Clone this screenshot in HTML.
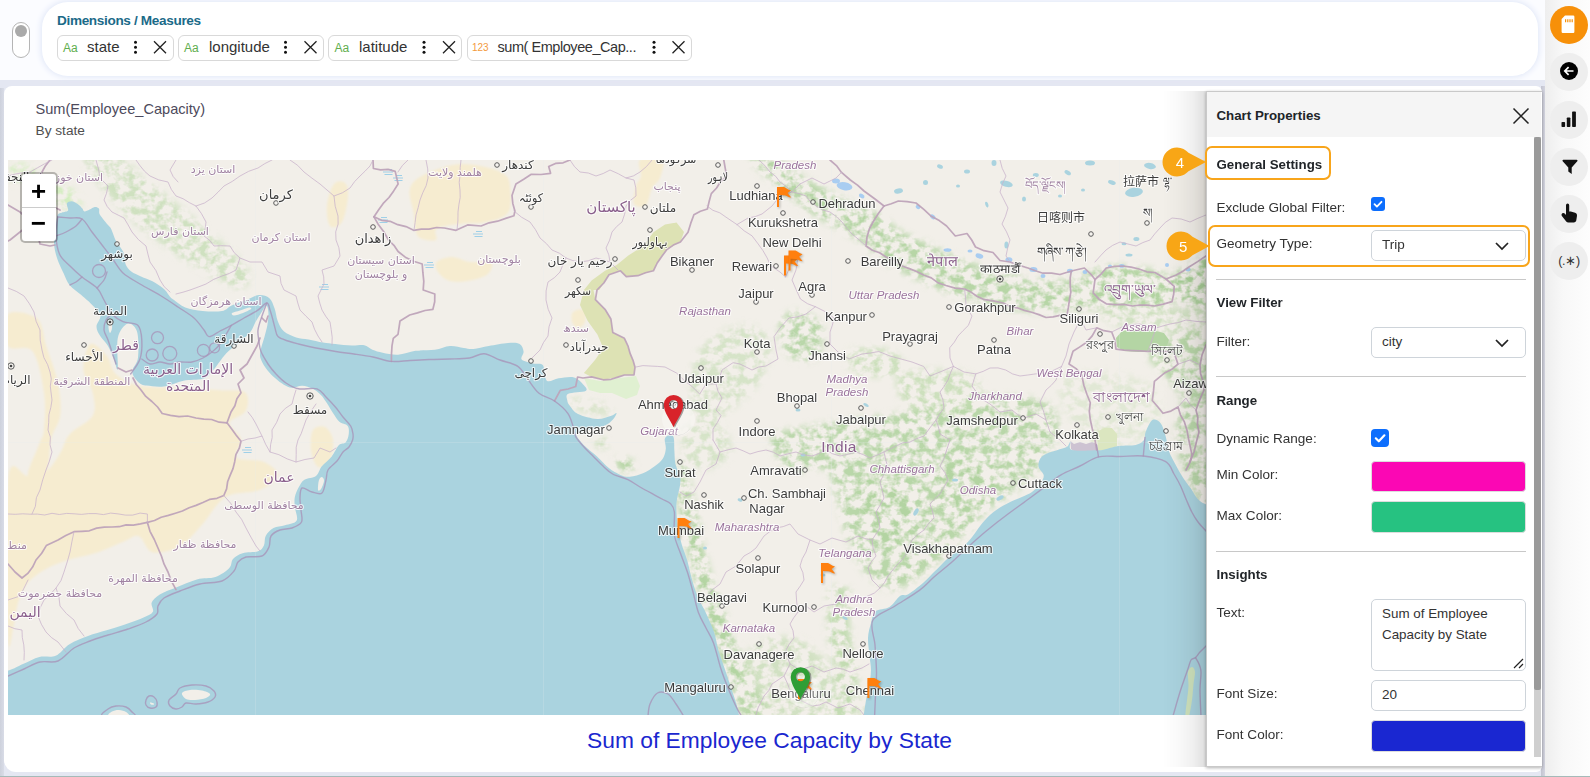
<!DOCTYPE html>
<html lang="en">
<head>
<meta charset="utf-8">
<title>Sum of Employee Capacity by State</title>
<style>
*{box-sizing:border-box;margin:0;padding:0}
html,body{width:1590px;height:777px;overflow:hidden}
body{position:relative;background:#e4e7f2;font-family:"Liberation Sans",sans-serif;color:#212529;font-size:14px}
.abs{position:absolute}
#topbg{left:0;top:0;width:1545px;height:80px;background:#fbfcff}
#topcard{left:42px;top:2px;width:1496px;height:74px;background:#fff;border-radius:26px;box-shadow:0 0 6px 1px #dfe6f7}
#toggle{left:12px;top:22px;width:18px;height:36px;border:1px solid #b5b5b5;border-radius:9px;background:#fff}
#toggle i{position:absolute;left:2px;top:2px;width:12px;height:12px;border-radius:50%;background:#aaa}
#dm{left:57px;top:12.600px;font-size:13.600px;font-weight:bold;color:#1b6a88;letter-spacing:-0.35px;white-space:nowrap}
.chip{top:35px;height:26px;border:1px solid #d9d9d9;border-radius:6px;background:#fff;white-space:nowrap}
.chip .t{position:absolute;top:3px;font-size:11px;color:#5fae4e}
.chip .n{position:absolute;top:2px;font-size:15px;color:#333}
.chip svg{position:absolute;top:0;left:0}
#side{left:1545px;top:0;width:45px;height:777px;background:linear-gradient(to right,#eeeeee,#f8f8f8 40%,#fdfdfd)}
#lstrip{left:0;top:88px;width:4px;height:689px;background:linear-gradient(to right,#cdd1dc,#d9dce7)}
#rstrip{left:1541px;top:86px;width:4px;height:691px;background:linear-gradient(to right,#c3c4d0,#d3d4df)}
#bline{left:0;top:775.500px;width:1590px;height:1.500px;background:#a5bab9}
.cb{left:1550px;width:38px;height:38px;border-radius:50%;background:#eeeeee}
#card{left:4px;top:86px;width:1538px;height:686px;background:#fff;border-radius:8px 6px 6px 12px}
#t1{left:35.500px;top:100.500px;font-size:14.600px;color:#4d4a5c;white-space:nowrap}
#t2{left:35.500px;top:123px;font-size:13.700px;color:#4f4f4f;white-space:nowrap}
#map{left:8px;top:160px;width:1198px;height:555px;overflow:hidden;background:#f2efe9}
#zc{left:11.5px;top:11.5px;width:38px;height:71.500px;border:2px solid rgba(0,0,0,.25);border-radius:5px;background:#fff;background-clip:padding-box}
.zb{width:34px;height:34px;text-align:center;padding-top:4px;font:bold 26px/30px "Liberation Mono","DejaVu Sans Mono",monospace;color:#000}
#cap{left:8px;top:726.800px;width:1523px;text-align:center;font-size:22.800px;color:#1a27cf;white-space:nowrap}
#pshadow{left:1162px;top:91px;width:44px;height:676px;background:linear-gradient(to right,rgba(0,0,0,0),rgba(0,0,0,0.02) 35%,rgba(0,0,0,0.06) 70%,rgba(0,0,0,0.13))}
#panel{left:1206px;top:91px;width:336px;height:676px;background:#fff;border:1px solid #c9c9c9;border-right:none;box-shadow:0 1px 3px rgba(0,0,0,.3)}
#phead{left:1207px;top:92px;width:334px;height:45px;background:#f5f5f5}
#ptitle{left:1216.500px;top:108.100px;font-size:13.300px;font-weight:bold;color:#212529;white-space:nowrap}
.h{left:1216.500px;font-size:13.300px;font-weight:bold;color:#212529;white-space:nowrap}
.l{left:1216.500px;font-size:13.550px;color:#333;white-space:nowrap}
.hr{left:1216px;width:310px;height:1px;background:#c8c8c8}
.inp{left:1371px;width:155px;border:1px solid #ced4da;border-radius:5px;background:#fff;font-size:13.500px;color:#333;padding:6px 0 0 10px}
.sw{left:1371px;width:155px;height:31px;border-radius:4px;border:1px solid #ddd}
.ck{width:15px;height:15px;border-radius:3px;background:#0d6efd}
.hl{border:2px solid #f8a51b;border-radius:7px}
#sbt{left:1534px;top:137px;width:7px;height:620px;background:#cfcfcf}
#sbh{left:1534px;top:137px;width:7px;height:553px;background:#9a9a9a;border-radius:2px}
</style>
</head>
<body>
<div class="abs" id="topbg"></div>
<div class="abs" id="topcard"></div>
<div class="abs" id="toggle"><i></i></div>
<div class="abs" id="dm">Dimensions / Measures</div>
<div class="abs chip" style="left:57px;width:117px"><span class="t" style="left:5px;color:#5fae4e;font-size:12px;top:5px">Aa</span><span class="n" style="left:29px">state</span><svg width="117" height="25" viewBox="0 0 117 25"><circle cx="77.5" cy="6.3" r="1.5" fill="#111"/><circle cx="77.5" cy="11.3" r="1.5" fill="#111"/><circle cx="77.5" cy="16.3" r="1.5" fill="#111"/><path d="M96 5.3l12 12M108 5.3l-12 12" stroke="#222" stroke-width="1.3" fill="none"/></svg></div>
<div class="abs chip" style="left:178px;width:146px"><span class="t" style="left:5px;color:#5fae4e;font-size:12px;top:5px">Aa</span><span class="n" style="left:30px">longitude</span><svg width="146" height="25" viewBox="0 0 146 25"><circle cx="106.5" cy="6.3" r="1.5" fill="#111"/><circle cx="106.5" cy="11.3" r="1.5" fill="#111"/><circle cx="106.5" cy="16.3" r="1.5" fill="#111"/><path d="M125.5 5.3l12 12M137.5 5.3l-12 12" stroke="#222" stroke-width="1.3" fill="none"/></svg></div>
<div class="abs chip" style="left:328px;width:134px"><span class="t" style="left:5.5px;color:#5fae4e;font-size:12px;top:5px">Aa</span><span class="n" style="left:30px">latitude</span><svg width="134" height="25" viewBox="0 0 134 25"><circle cx="95" cy="6.3" r="1.5" fill="#111"/><circle cx="95" cy="11.3" r="1.5" fill="#111"/><circle cx="95" cy="16.3" r="1.5" fill="#111"/><path d="M114 5.3l12 12M126 5.3l-12 12" stroke="#222" stroke-width="1.3" fill="none"/></svg></div>
<div class="abs chip" style="left:467px;width:225px"><span class="t" style="left:4px;color:#f39a3d;font-size:10px;top:6px">123</span><span class="n" style="left:29.5px;font-size:14.500px;letter-spacing:-0.450px;top:2.500px">sum( Employee_Cap...</span><svg width="225" height="25" viewBox="0 0 225 25"><circle cx="186" cy="6.3" r="1.5" fill="#111"/><circle cx="186" cy="11.3" r="1.5" fill="#111"/><circle cx="186" cy="16.3" r="1.5" fill="#111"/><path d="M204.5 5.3l12 12M216.5 5.3l-12 12" stroke="#222" stroke-width="1.3" fill="none"/></svg></div>
<div class="abs" id="side"></div>
<div class="abs" id="lstrip"></div><div class="abs" id="rstrip"></div><div class="abs" id="bline"></div>
<div class="abs cb" style="top:6px;background:#f79009"></div>
<svg class="abs" style="left:1550px;top:6px" width="38" height="38" viewBox="0 0 38 38"><path d="M15 9.5h8.2a1.2 1.2 0 0 1 1.2 1.2v15.1a1.2 1.2 0 0 1-1.2 1.2h-10.4a1.2 1.2 0 0 1-1.2-1.2v-12.8z" fill="#fff"/><path d="M15.6 13.2v3M17.8 13.2v3M20 13.2v3M22.2 13.2v3" stroke="#f79009" stroke-width="1.2"/></svg>
<div class="abs cb" style="top:53px"></div>
<div class="abs cb" style="top:100.5px"></div>
<div class="abs cb" style="top:147.5px"></div>
<div class="abs cb" style="top:194.5px"></div>
<div class="abs cb" style="top:241.5px"></div>
<svg class="abs" style="left:1550px;top:53px" width="38" height="38" viewBox="0 0 38 38"><circle cx="19" cy="18" r="9" fill="#000"/><path d="M23.5 18h-8.5M18.6 14.2l-3.8 3.8 3.8 3.8" stroke="#fff" stroke-width="1.7" fill="none"/></svg>
<svg class="abs" style="left:1550px;top:100.5px" width="38" height="38" viewBox="0 0 38 38"><rect x="11.5" y="21" width="3.6" height="5" rx="0.8" fill="#111"/><rect x="16.8" y="16.5" width="3.6" height="9.5" rx="0.8" fill="#111"/><rect x="22.1" y="10.5" width="3.8" height="15.5" rx="0.8" fill="#111"/></svg>
<svg class="abs" style="left:1550px;top:147.5px" width="38" height="38" viewBox="0 0 38 38"><path d="M11.400 11.800h15.200a.9.9 0 0 1 .7 1.500l-5.600 6.300v6.300l-3.400-2.300v-4l-5.600-6.300a.9.9 0 0 1 .7-1.500z" fill="#111"/></svg>
<svg class="abs" style="left:1550px;top:194.5px" width="38" height="38" viewBox="0 0 38 38"><path d="M16 10.2a1.6 1.6 0 0 1 3.2 0v6.2l1.6.2 4.3 1.2c1.3.4 2.1 1.5 1.9 2.9l-.7 4.6c-.2 1.3-1.2 2.2-2.5 2.2h-5.400c-.9 0-1.700-.4-2.200-1.100l-4.300-5.500c-.6-.8-.5-1.900.3-2.500.7-.6 1.800-.5 2.500.2l1.300 1.300z" fill="#111"/></svg>
<div class="abs" style="left:1550px;top:252.5px;width:38px;text-align:center;font-size:12.500px;letter-spacing:-0.3px;color:#333;font-family:'Liberation Sans',sans-serif;white-space:nowrap">(.&#8727;)</div>
<div class="abs" id="card"></div>
<div class="abs" id="t1">Sum(Employee_Capacity)</div>
<div class="abs" id="t2">By state</div>
<div class="abs" id="map">
<svg width="1198" height="555" viewBox="8 160 1198 555" style="position:absolute;left:0;top:0;display:block" font-family="Liberation Sans, DejaVu Sans, Noto Sans CJK SC, sans-serif">
<defs><filter id="b3" x="-20%" y="-20%" width="140%" height="140%"><feGaussianBlur stdDeviation="3"/></filter><filter id="b6" x="-30%" y="-30%" width="160%" height="160%"><feGaussianBlur stdDeviation="6"/></filter><filter id="forest" filterUnits="userSpaceOnUse" x="8" y="160" width="1198" height="555"><feGaussianBlur in="SourceGraphic" stdDeviation="3.5" result="bl"/><feTurbulence type="fractalNoise" baseFrequency="0.11 0.13" numOctaves="3" seed="7" result="nz"/><feColorMatrix in="nz" type="matrix" values="0 0 0 0 0 0 0 0 0 0 0 0 0 0 0 0 3.6 0 0 -1.42" result="mk"/><feComposite in="bl" in2="mk" operator="in"/></filter><filter id="b1" x="-10%" y="-10%" width="120%" height="120%"><feGaussianBlur stdDeviation="1.2"/></filter></defs>
<rect x="8" y="160" width="1198" height="555" fill="#f2efe9"/>
<g fill="#f6ecd0" filter="url(#b1)">
<path d="M409.7 189.7C411.0 183.6 413.9 180.4 421.3 176.2C428.7 172.0 443.7 166.3 454.0 164.7C464.3 163.1 474.6 165.0 483.0 166.6C491.4 168.2 499.8 171.1 504.3 174.3C508.8 177.5 509.4 179.5 510.0 185.9C510.6 192.3 512.5 206.9 508.0 213.0C503.5 219.1 490.4 220.8 483.0 222.6C475.6 224.3 471.4 222.5 463.7 223.5C456.0 224.5 441.6 225.7 437.0 228.4C432.4 231.2 438.8 238.4 436.0 240.0C433.2 241.6 423.4 239.8 420.0 238.0C416.6 236.2 416.6 233.5 415.5 229.3C414.4 225.1 414.6 219.6 413.6 213.0C412.6 206.4 408.4 195.8 409.7 189.7Z"/>
<path d="M436.7 262.0C439.0 259.5 446.4 257.0 452.0 257.0C457.6 257.0 463.5 261.2 470.0 262.0C476.5 262.8 487.8 260.0 490.8 262.0C493.8 264.0 491.5 270.9 488.0 274.0C484.5 277.1 476.3 279.3 470.0 280.5C463.7 281.7 455.3 282.4 450.0 281.0C444.7 279.6 440.2 275.2 438.0 272.0C435.8 268.8 434.4 264.5 436.7 262.0Z"/>
<path d="M334.0 184.0C337.0 180.3 342.7 181.0 345.0 183.0C347.3 185.0 348.5 189.5 348.0 196.0C347.5 202.5 345.0 217.0 342.0 222.0C339.0 227.0 332.5 228.8 330.0 226.0C327.5 223.2 326.3 212.0 327.0 205.0C327.7 198.0 331.0 187.7 334.0 184.0Z"/>
<path d="M640.0 160.0C643.5 157.3 658.7 157.0 662.0 160.0C665.3 163.0 661.7 173.3 660.0 178.0C658.3 182.7 654.3 183.5 652.0 188.0C649.7 192.5 649.0 202.3 646.0 205.0C643.0 207.7 635.7 207.2 634.0 204.0C632.3 200.8 634.8 190.7 636.0 186.0C637.2 181.3 640.3 180.3 641.0 176.0C641.7 171.7 636.5 162.7 640.0 160.0Z"/>
<path d="M8.0 314.0C12.8 309.4 30.6 313.1 37.0 318.5C43.4 323.9 42.8 335.5 46.3 346.3C49.8 357.1 55.7 371.8 58.0 383.4C60.3 395.0 61.4 406.5 60.2 415.8C59.0 425.1 53.3 429.7 51.0 439.0C48.7 448.3 50.2 465.3 46.3 471.5C42.4 477.7 28.9 480.6 27.8 476.0C26.7 471.4 36.7 451.3 39.4 443.6C42.1 435.9 43.2 438.2 44.0 429.7C44.8 421.2 45.9 405.8 44.0 392.7C42.1 379.6 38.4 358.7 32.4 351.0C26.4 343.3 12.1 352.5 8.0 346.3C3.9 340.1 3.2 318.6 8.0 314.0Z"/>
<path d="M90.4 344.0C94.3 341.7 102.4 350.6 106.6 355.6C110.8 360.6 110.4 369.0 115.8 374.0C121.2 379.0 127.4 383.4 139.0 385.7C150.6 388.0 171.5 387.2 185.4 388.0C199.3 388.8 212.4 389.6 222.4 390.4C232.4 391.2 241.7 389.2 245.6 392.7C249.5 396.2 248.3 406.2 245.6 411.2C242.9 416.2 230.2 418.2 229.4 422.8C228.6 427.4 239.8 433.2 241.0 439.0C242.2 444.8 232.5 453.8 236.3 457.6C240.1 461.4 257.1 458.9 264.0 462.0C270.9 465.1 278.8 471.3 278.0 476.0C277.2 480.7 267.2 486.9 259.5 490.0C251.8 493.1 238.6 492.3 231.7 494.6C224.8 496.9 222.4 499.3 217.8 503.9C213.2 508.5 210.1 515.4 203.9 522.4C197.7 529.4 189.2 540.6 180.7 545.6C172.2 550.6 159.8 554.0 152.9 552.5C146.0 551.0 143.7 538.2 139.0 536.3C134.3 534.4 131.9 538.3 125.0 541.0C118.0 543.7 106.5 549.4 97.3 552.5C88.0 555.6 78.0 556.8 69.5 559.5C61.0 562.2 53.2 564.9 46.3 568.8C39.3 572.7 32.4 577.3 27.8 582.7C23.2 588.1 20.8 594.2 18.5 601.2C16.2 608.2 15.7 618.2 13.9 624.4C12.2 630.6 9.0 662.6 8.0 638.3C7.0 614.0 4.7 505.4 8.0 478.4C11.3 451.3 21.4 477.1 27.8 476.0C34.2 474.9 40.9 475.3 46.3 471.5C51.7 467.7 56.3 459.2 60.2 453.0C64.1 446.8 64.1 440.6 69.5 434.4C74.9 428.2 88.8 422.8 92.7 415.8C96.6 408.9 94.2 400.4 92.7 392.7C91.2 385.0 83.8 377.6 83.4 369.5C83.0 361.4 86.5 346.3 90.4 344.0Z"/>
<path d="M313.0 430.0C315.3 426.2 321.7 425.3 325.0 427.0C328.3 428.7 332.2 434.5 333.0 440.0C333.8 445.5 332.5 455.5 330.0 460.0C327.5 464.5 321.2 468.7 318.0 467.0C314.8 465.3 311.8 456.2 311.0 450.0C310.2 443.8 310.7 433.8 313.0 430.0Z"/>
<path d="M573.0 312.0C575.0 310.0 582.0 308.3 584.0 310.0C586.0 311.7 586.0 319.0 585.0 322.0C584.0 325.0 580.2 328.0 578.0 328.0C575.8 328.0 572.8 324.7 572.0 322.0C571.2 319.3 571.0 314.0 573.0 312.0Z"/>
</g>
<g filter="url(#forest)">
<path d="M749.3 154.1C748.7 157.8 750.3 160.6 757.0 167.7C763.8 174.8 779.3 188.4 789.8 196.8C800.2 205.2 808.8 211.3 819.8 218.2C830.8 225.1 844.8 231.1 855.7 238.3C866.5 245.4 874.6 254.7 884.7 261.4C894.7 268.1 904.9 272.8 915.9 278.3C926.9 283.7 938.4 289.5 950.8 293.9C963.2 298.3 977.2 301.6 990.4 304.5C1003.7 307.4 1016.9 310.4 1030.2 311.4C1043.5 312.4 1059.0 311.6 1070.3 310.4C1081.6 309.3 1094.5 310.5 1098.1 304.7C1101.7 298.8 1097.0 279.3 1091.9 275.3C1086.8 271.3 1077.4 279.8 1067.7 280.6C1058.0 281.3 1044.9 281.1 1033.4 279.6C1021.9 278.1 1010.3 274.7 998.6 271.5C986.9 268.3 974.4 264.4 963.2 260.1C952.0 255.8 941.4 250.3 931.3 245.7C921.2 241.2 912.6 238.4 902.7 232.6C892.9 226.8 883.9 217.4 872.3 210.9C860.8 204.5 844.9 199.4 833.4 193.8C822.0 188.2 814.4 183.8 803.6 177.2C792.9 170.6 776.1 159.5 769.0 154.3C761.8 149.0 763.9 145.9 760.7 145.9C757.4 145.9 749.9 150.5 749.3 154.1Z" fill="#b3d4a2" opacity="0.95"/>
<path d="M1091.0 272.0C1094.3 265.8 1108.5 266.0 1120.0 266.0C1131.5 266.0 1151.3 268.8 1160.0 272.0C1168.7 275.2 1170.3 279.5 1172.0 285.0C1173.7 290.5 1177.0 301.2 1170.0 305.0C1163.0 308.8 1141.7 308.3 1130.0 308.0C1118.3 307.7 1106.5 309.0 1100.0 303.0C1093.5 297.0 1087.7 278.2 1091.0 272.0Z" fill="#b3d4a2" opacity="1"/>
<path d="M1172.0 276.0C1174.7 270.7 1183.7 269.5 1190.0 266.0C1196.3 262.5 1206.7 248.5 1210.0 255.0C1213.3 261.5 1214.2 297.0 1210.0 305.0C1205.8 313.0 1191.0 304.2 1185.0 303.0C1179.0 301.8 1176.2 302.5 1174.0 298.0C1171.8 293.5 1169.3 281.3 1172.0 276.0Z" fill="#a9cf98" opacity="1"/>
<path d="M1150.0 352.0C1157.5 346.2 1200.0 314.5 1210.0 340.0C1220.0 365.5 1213.0 480.0 1210.0 505.0C1207.0 530.0 1197.0 497.5 1192.0 490.0C1187.0 482.5 1182.7 470.0 1180.0 460.0C1177.3 450.0 1175.7 440.0 1176.0 430.0C1176.3 420.0 1183.8 409.2 1182.0 400.0C1180.2 390.8 1170.3 383.0 1165.0 375.0C1159.7 367.0 1142.5 357.8 1150.0 352.0Z" fill="#b3d4a2" opacity="0.9"/>
<path d="M1100.0 305.0C1110.0 302.7 1151.7 307.2 1170.0 308.0C1188.3 308.8 1203.3 305.5 1210.0 310.0C1216.7 314.5 1220.0 331.7 1210.0 335.0C1200.0 338.3 1166.7 332.2 1150.0 330.0C1133.3 327.8 1118.3 326.2 1110.0 322.0C1101.7 317.8 1090.0 307.3 1100.0 305.0Z" fill="#c3dcb2" opacity="0.7"/>
<path d="M84.7 157.9C83.7 164.8 92.4 173.9 99.4 183.4C106.3 192.8 116.8 205.2 126.5 214.8C136.2 224.3 147.0 232.7 157.5 240.6C168.0 248.6 178.9 256.0 189.3 262.5C199.6 268.9 211.1 274.9 219.6 279.2C228.0 283.5 234.8 288.7 239.9 288.2C245.0 287.6 250.7 281.0 250.1 275.8C249.5 270.6 243.0 263.9 236.4 256.8C229.9 249.8 219.7 241.4 210.7 233.5C201.7 225.6 192.0 217.4 182.5 209.4C173.0 201.3 163.1 193.4 153.5 185.2C143.8 177.1 132.7 167.8 124.6 160.6C116.6 153.4 111.9 142.5 105.3 142.1C98.6 141.6 85.7 151.1 84.7 157.9Z" fill="#c3dcb2" opacity="0.75"/>
<path d="M38.0 186.0C43.0 183.8 54.3 182.3 60.0 183.0C65.7 183.7 68.3 186.5 72.0 190.0C75.7 193.5 82.3 200.7 82.0 204.0C81.7 207.3 74.0 209.7 70.0 210.0C66.0 210.3 62.2 207.7 58.0 206.0C53.8 204.3 49.7 201.7 45.0 200.0C40.3 198.3 31.2 198.3 30.0 196.0C28.8 193.7 33.0 188.2 38.0 186.0Z" fill="#d3edbf" opacity="1"/>
<path d="M8.0 166.0C11.7 163.3 24.7 162.5 30.0 164.0C35.3 165.5 40.8 172.0 40.0 175.0C39.2 178.0 30.3 181.2 25.0 182.0C19.7 182.8 10.8 182.7 8.0 180.0C5.2 177.3 4.3 168.7 8.0 166.0Z" fill="#d3edbf" opacity="0.8"/>
<path d="M782.0 318.0C785.3 313.3 793.7 311.3 800.0 312.0C806.3 312.7 816.3 316.5 820.0 322.0C823.7 327.5 823.3 338.7 822.0 345.0C820.7 351.3 817.0 357.8 812.0 360.0C807.0 362.2 797.3 361.3 792.0 358.0C786.7 354.7 781.7 346.7 780.0 340.0C778.3 333.3 778.7 322.7 782.0 318.0Z" fill="#b3d4a2" opacity="0.9"/>
<path d="M849.0 351.0C854.0 347.7 871.3 346.8 880.0 348.0C888.7 349.2 898.0 353.7 901.0 358.0C904.0 362.3 903.2 371.0 898.0 374.0C892.8 377.0 878.0 377.0 870.0 376.0C862.0 375.0 853.5 372.2 850.0 368.0C846.5 363.8 844.0 354.3 849.0 351.0Z" fill="#c3dcb2" opacity="0.8"/>
<path d="M770.0 438.0C771.7 431.0 786.7 431.0 800.0 428.0C813.3 425.0 832.5 422.7 850.0 420.0C867.5 417.3 886.7 415.7 905.0 412.0C923.3 408.3 942.5 400.7 960.0 398.0C977.5 395.3 995.0 394.8 1010.0 396.0C1025.0 397.2 1042.0 399.3 1050.0 405.0C1058.0 410.7 1058.8 420.5 1058.0 430.0C1057.2 439.5 1051.3 452.3 1045.0 462.0C1038.7 471.7 1029.2 480.3 1020.0 488.0C1010.8 495.7 999.2 500.2 990.0 508.0C980.8 515.8 973.3 526.3 965.0 535.0C956.7 543.7 948.3 552.5 940.0 560.0C931.7 567.5 923.3 575.0 915.0 580.0C906.7 585.0 897.8 590.8 890.0 590.0C882.2 589.2 874.7 582.5 868.0 575.0C861.3 567.5 855.0 556.7 850.0 545.0C845.0 533.3 842.0 517.5 838.0 505.0C834.0 492.5 834.0 475.8 826.0 470.0C818.0 464.2 799.3 475.3 790.0 470.0C780.7 464.7 768.3 445.0 770.0 438.0Z" fill="#b3d4a2" opacity="0.9"/>
<path d="M862.0 480.0C866.8 470.7 886.2 469.5 895.0 472.0C903.8 474.5 912.2 485.3 915.0 495.0C917.8 504.7 916.2 521.2 912.0 530.0C907.8 538.8 897.7 548.3 890.0 548.0C882.3 547.7 870.7 539.3 866.0 528.0C861.3 516.7 857.2 489.3 862.0 480.0Z" fill="#b3d4a2" opacity="1"/>
<path d="M935.0 470.0C939.2 461.7 964.2 460.3 975.0 462.0C985.8 463.7 998.3 472.8 1000.0 480.0C1001.7 487.2 993.3 499.7 985.0 505.0C976.7 510.3 958.3 517.8 950.0 512.0C941.7 506.2 930.8 478.3 935.0 470.0Z" fill="#b3d4a2" opacity="1"/>
<path d="M900.0 375.0C908.3 369.0 945.8 369.2 960.0 372.0C974.2 374.8 985.0 385.3 985.0 392.0C985.0 398.7 972.5 409.3 960.0 412.0C947.5 414.7 920.0 414.2 910.0 408.0C900.0 401.8 891.7 381.0 900.0 375.0Z" fill="#c3dcb2" opacity="0.8"/>
<path d="M675.1 465.7C673.6 469.5 674.9 477.9 676.1 487.3C677.3 496.6 679.8 509.1 682.2 521.6C684.5 534.0 687.0 548.4 690.2 561.9C693.5 575.5 697.4 589.2 701.4 602.8C705.5 616.4 709.9 629.9 714.6 643.5C719.4 657.1 724.8 671.4 729.9 684.3C734.9 697.2 738.9 716.4 745.0 720.9C751.2 725.3 766.1 718.7 767.0 711.1C767.8 703.6 755.7 688.2 750.1 675.7C744.5 663.3 738.6 649.6 733.4 636.5C728.1 623.4 723.2 610.3 718.6 597.2C714.0 584.1 709.2 571.2 705.8 558.1C702.3 544.9 700.5 530.6 697.8 518.4C695.2 506.2 692.0 493.8 689.9 484.7C687.7 475.7 687.4 467.5 684.9 464.3C682.5 461.1 676.5 461.9 675.1 465.7Z" fill="#b3d4a2" opacity="1"/>
<path d="M830.0 589.3C826.2 594.3 826.8 610.0 827.0 620.4C827.2 630.8 829.3 641.9 831.1 651.8C833.0 661.7 838.0 669.3 838.0 679.7C838.0 690.1 829.4 707.7 831.2 714.0C833.0 720.4 844.3 723.6 848.8 718.0C853.2 712.3 857.3 691.9 858.0 680.3C858.7 668.7 854.4 658.3 852.9 648.2C851.4 638.1 849.5 629.2 849.0 619.6C848.5 610.0 853.1 595.7 850.0 590.7C846.8 585.6 833.9 584.4 830.0 589.3Z" fill="#c3dcb2" opacity="1"/>
<path d="M700.0 350.0C708.3 337.5 728.3 326.7 740.0 325.0C751.7 323.3 766.7 330.8 770.0 340.0C773.3 349.2 766.7 368.3 760.0 380.0C753.3 391.7 739.2 401.7 730.0 410.0C720.8 418.3 711.7 431.7 705.0 430.0C698.3 428.3 690.8 413.3 690.0 400.0C689.2 386.7 691.7 362.5 700.0 350.0Z" fill="#c3dcb2" opacity="0.6"/>
<path d="M686.0 430.0C692.0 425.0 712.7 420.8 720.0 425.0C727.3 429.2 733.3 447.5 730.0 455.0C726.7 462.5 707.7 470.0 700.0 470.0C692.3 470.0 686.3 461.7 684.0 455.0C681.7 448.3 680.0 435.0 686.0 430.0Z" fill="#c3dcb2" opacity="0.6"/>
<path d="M750.0 650.0C758.3 637.3 783.3 633.3 800.0 640.0C816.7 646.7 840.0 677.3 850.0 690.0C860.0 702.7 876.7 711.7 860.0 716.0C843.3 720.3 768.3 727.0 750.0 716.0C731.7 705.0 741.7 662.7 750.0 650.0Z" fill="#c3dcb2" opacity="0.7"/>
<path d="M616.0 459.0C618.3 457.7 630.5 459.0 633.0 461.0C635.5 463.0 633.3 469.7 631.0 471.0C628.7 472.3 621.5 471.0 619.0 469.0C616.5 467.0 613.7 460.3 616.0 459.0Z" fill="#b3d4a2" opacity="1"/>
<path d="M597.0 439.0C598.7 437.8 605.7 438.5 607.0 440.0C608.3 441.5 606.7 446.8 605.0 448.0C603.3 449.2 598.3 448.5 597.0 447.0C595.7 445.5 595.3 440.2 597.0 439.0Z" fill="#c3dcb2" opacity="1"/>
<path d="M570.0 398.0C573.7 396.7 593.0 399.7 600.0 402.0C607.0 404.3 612.0 409.7 612.0 412.0C612.0 414.3 605.7 416.3 600.0 416.0C594.3 415.7 583.0 413.0 578.0 410.0C573.0 407.0 566.3 399.3 570.0 398.0Z" fill="#c3dcb2" opacity="0.5"/>
<path d="M1060.0 380.0C1065.0 372.0 1085.0 371.2 1100.0 372.0C1115.0 372.8 1140.0 377.0 1150.0 385.0C1160.0 393.0 1161.7 410.8 1160.0 420.0C1158.3 429.2 1150.0 435.8 1140.0 440.0C1130.0 444.2 1111.7 448.3 1100.0 445.0C1088.3 441.7 1076.7 430.8 1070.0 420.0C1063.3 409.2 1055.0 388.0 1060.0 380.0Z" fill="#c3dcb2" opacity="0.35"/>
<path d="M1097.0 432.0C1099.7 429.3 1107.2 425.8 1110.0 428.0C1112.8 430.2 1115.7 441.3 1114.0 445.0C1112.3 448.7 1103.3 450.2 1100.0 450.0C1096.7 449.8 1094.5 447.0 1094.0 444.0C1093.5 441.0 1094.3 434.7 1097.0 432.0Z" fill="#cfe0b0" opacity="1"/>
</g>
<path d="M676.5 222.6 L665.0 224.5 L653.4 232.2 L643.7 245.7 L628.3 255.4 L616.7 265.0 L605.0 270.8 L591.6 280.5 L583.9 290.0 L580.0 305.0 L587.7 320.9 L597.4 334.4 L603.2 347.9 L595.4 359.5 L583.9 373.0 L591.6 376.9 L603.2 379.8 L618.6 376.9 L624.4 375.0 L634.0 375.0 L635.0 367.2 L630.2 353.7 L624.4 338.3 L612.8 332.5 L610.9 319.0 L605.0 309.3 L595.4 299.7 L593.5 290.0 L599.3 290.0 L609.0 274.7 L620.5 270.8 L626.3 276.6 L637.9 275.7 L653.4 270.8 L657.2 263.0 L666.9 249.6 L680.4 241.9 L684.0 232.0Z" fill="#dde2b4"/>
<path d="M584.0 378.0 L600.0 381.0 L620.0 378.0 L636.0 376.0 L640.0 386.0 L637.0 395.0 L626.0 399.0 L612.0 393.0 L600.0 393.0 L589.0 390.0Z" fill="#e0f0d1"/>
<path d="M1116.0 338.0 L1122.0 331.0 L1136.0 329.0 L1152.0 330.0 L1164.0 333.0 L1169.0 340.0 L1166.0 348.0 L1154.0 352.0 L1138.0 352.0 L1124.0 351.0 L1117.0 347.0Z" fill="#b4d5a4"/>
<path d="M1070.5 441.0 L1074.0 444.0 L1080.0 442.0 L1086.0 444.0 L1092.0 442.0 L1097.0 444.0 L1097.5 451.0 L1090.0 452.0 L1082.0 451.0 L1075.0 452.0 L1071.0 449.0Z" fill="#cdc3d2"/>
<path d="M1097.0 432.0 L1104.0 428.0 L1112.0 428.0 L1117.0 434.0 L1117.0 446.0 L1110.0 450.0 L1098.0 451.0Z" fill="#dbe6c0"/>
<path d="M57.7 214.7C58.7 212.6 60.1 213.4 61.8 212.7C63.5 212.0 67.2 212.1 68.0 210.6C68.8 209.1 66.2 204.9 66.9 203.4C67.6 201.9 70.1 201.1 72.0 201.3C73.9 201.5 76.6 203.2 78.3 204.4C80.0 205.6 81.4 207.4 82.4 208.6C83.4 209.8 83.2 211.4 84.4 211.6C85.6 211.8 87.9 210.4 89.6 209.6C91.3 208.8 93.2 207.2 94.7 207.0C96.2 206.8 98.1 207.5 98.9 208.6C99.7 209.7 98.7 212.0 99.4 213.7C100.1 215.4 101.6 217.0 103.0 218.9C104.4 220.8 106.6 223.3 108.0 225.0C109.4 226.7 109.9 226.4 111.2 229.0C112.5 231.6 113.8 236.8 115.8 240.7C117.8 244.6 121.9 248.4 123.5 252.3C125.1 256.2 124.2 260.7 125.5 263.9C126.8 267.1 128.7 269.5 131.3 271.6C133.9 273.7 137.5 274.8 141.0 276.4C144.5 278.0 148.7 279.2 152.5 281.3C156.3 283.4 161.1 286.4 164.0 289.0C166.9 291.6 168.4 294.9 170.0 296.7C171.6 298.5 171.1 297.9 173.7 299.7C176.2 301.5 180.5 305.5 185.3 307.4C190.1 309.3 196.6 310.4 202.7 311.0C208.8 311.6 217.2 311.9 222.0 311.0C226.8 310.1 227.5 307.3 231.7 305.4C235.9 303.5 242.4 301.4 247.0 299.7C251.6 298.0 255.3 295.2 259.0 295.0C262.7 294.8 266.8 295.9 269.4 298.2C272.0 300.4 273.2 304.7 274.6 308.5C276.0 312.3 276.2 317.1 277.7 320.9C279.2 324.7 280.7 328.4 283.8 331.2C286.9 333.9 292.1 336.0 296.2 337.4C300.3 338.8 304.0 338.5 308.5 339.4C313.0 340.2 318.5 341.7 323.0 342.5C327.5 343.3 330.5 343.5 335.3 344.0C340.1 344.5 347.0 345.4 351.8 345.6C356.6 345.8 360.8 344.5 364.2 345.2C367.6 345.9 369.3 348.4 372.4 349.7C375.5 350.9 378.4 351.9 382.7 352.7C387.0 353.5 392.5 355.0 398.0 354.7C403.5 354.4 409.4 351.6 415.5 350.8C421.6 350.0 429.1 350.6 434.8 349.8C440.6 349.0 445.2 346.3 450.0 346.0C454.8 345.7 459.8 347.5 463.7 348.0C467.6 348.5 469.2 349.2 473.4 348.9C477.6 348.6 483.0 347.0 488.8 346.0C494.6 345.0 502.9 343.3 508.0 343.0C513.1 342.7 517.1 342.5 519.7 344.0C522.3 345.5 523.3 349.2 523.6 351.8C523.9 354.4 520.1 357.6 521.7 359.5C523.3 361.4 529.5 362.4 533.0 363.4C536.5 364.4 540.7 362.4 543.0 365.3C545.3 368.2 544.2 378.5 546.8 380.7C549.4 382.9 554.1 378.9 558.6 378.3C563.1 377.8 569.8 376.3 574.0 377.4C578.2 378.5 581.8 382.7 583.7 385.0C585.6 387.3 588.2 389.5 585.6 391.0C583.0 392.5 571.3 392.2 568.3 393.8C565.2 395.4 567.0 398.5 567.3 400.5C567.6 402.5 568.2 403.8 570.0 406.0C571.8 408.2 573.5 411.8 578.0 414.0C582.5 416.2 591.5 418.7 597.0 419.0C602.5 419.3 607.5 417.0 610.7 416.0C614.0 415.0 616.2 412.4 616.5 413.0C616.8 413.6 614.6 417.7 612.7 419.8C610.8 421.9 608.2 424.2 605.0 425.6C601.8 427.1 597.3 427.5 593.4 428.5C589.5 429.5 584.7 430.4 581.8 431.4C578.9 432.4 575.7 432.0 576.0 434.3C576.3 436.6 580.2 441.3 583.7 445.0C587.2 448.7 592.8 452.7 597.0 456.5C601.2 460.3 604.9 464.9 608.8 468.0C612.7 471.1 616.9 473.4 620.4 474.9C623.9 476.4 626.1 477.1 630.0 476.8C633.9 476.5 639.4 474.8 643.6 473.0C647.8 471.2 651.8 468.4 655.0 466.0C658.2 463.6 661.1 461.4 662.9 458.5C664.7 455.6 665.5 452.1 665.8 448.8C666.1 445.6 664.3 441.2 664.8 439.0C665.3 436.8 667.1 435.6 668.6 435.3C670.1 435.0 672.5 434.4 673.5 437.0C674.5 439.6 674.1 446.2 674.4 450.7C674.7 455.2 674.5 459.8 675.4 464.0C676.3 468.2 679.2 472.2 680.0 475.8C680.8 479.4 680.5 481.6 680.0 485.5C679.5 489.4 677.6 494.9 677.0 499.0C676.4 503.1 676.3 505.6 676.4 510.0C676.5 514.4 676.8 520.0 677.6 525.5C678.4 531.0 679.8 537.4 681.4 543.3C683.0 549.2 685.7 555.1 687.4 561.0C689.1 566.9 690.1 572.9 691.8 578.8C693.5 584.7 695.2 590.7 697.7 596.6C700.2 602.5 703.9 608.5 706.6 614.4C709.3 620.3 712.0 626.1 714.0 632.0C716.0 637.9 716.7 644.0 718.4 650.0C720.1 656.0 722.4 661.8 724.4 667.7C726.4 673.6 728.3 679.5 730.3 685.4C732.3 691.3 734.7 698.1 736.2 703.2C737.7 708.3 737.7 709.0 739.2 716.0C740.7 723.0 873.2 740.2 745.0 745.0C616.8 749.8 99.2 755.8 -30.0 745.0C-159.2 734.2 -36.2 692.3 -30.0 680.0C-23.8 667.7 -1.8 673.7 7.0 671.0C15.8 668.3 17.6 666.3 23.0 664.0C28.4 661.7 34.0 658.4 39.4 657.0C44.8 655.6 50.6 657.9 55.6 655.8C60.6 653.7 64.1 647.5 69.5 644.2C74.9 640.9 81.8 638.3 88.0 636.0C94.2 633.7 100.4 632.2 106.6 630.3C112.8 628.4 118.8 626.6 125.0 624.5C131.2 622.4 138.9 619.7 143.6 617.6C148.2 615.5 151.6 614.3 152.9 611.8C154.2 609.3 150.5 605.4 151.7 602.5C152.8 599.6 155.8 596.9 159.8 594.4C163.9 591.9 169.8 590.0 176.0 587.5C182.2 585.0 190.3 581.1 196.9 579.4C203.5 577.6 210.0 578.9 215.4 577.0C220.8 575.1 226.4 571.0 229.3 568.0C232.2 565.0 230.8 561.5 233.0 559.0C235.2 556.5 238.5 554.5 242.7 553.2C246.9 551.9 254.5 552.6 258.0 551.3C261.5 550.0 262.6 548.1 263.9 545.5C265.2 542.9 264.2 538.7 265.8 535.8C267.4 532.9 270.3 529.8 273.5 528.0C276.7 526.2 281.1 526.5 285.0 525.2C288.9 523.9 295.1 523.5 296.7 520.4C298.3 517.3 295.1 510.8 294.8 506.9C294.5 503.0 294.2 500.4 294.8 497.2C295.4 494.0 297.0 490.5 298.6 487.6C300.2 484.7 301.5 481.7 304.4 479.8C307.3 477.9 313.1 478.2 316.0 476.0C318.9 473.8 319.2 469.5 321.8 466.3C324.4 463.1 328.6 460.2 331.5 456.7C334.4 453.1 336.6 447.4 339.0 445.0C341.4 442.6 344.0 444.2 345.6 442.4C347.2 440.6 348.4 436.9 348.7 434.2C349.0 431.4 349.2 428.0 347.7 425.9C346.1 423.8 341.8 423.9 339.4 421.8C337.0 419.8 335.4 416.7 333.3 413.6C331.2 410.5 329.1 406.4 327.0 403.3C324.9 400.2 323.3 397.4 320.9 395.0C318.5 392.6 315.8 390.3 312.7 388.8C309.6 387.3 305.8 386.0 302.4 385.8C298.9 385.6 295.1 388.0 292.0 387.8C288.9 387.6 286.5 386.2 283.8 384.7C281.1 383.2 278.3 381.0 275.6 378.6C272.9 376.2 269.8 373.4 267.4 370.3C265.0 367.2 262.4 363.1 261.2 360.0C260.0 356.9 259.7 355.6 260.2 351.8C260.7 348.0 263.1 341.9 264.3 337.4C265.5 332.9 266.7 329.1 267.4 325.0C268.1 320.9 268.6 316.0 268.4 312.7C268.2 309.4 267.5 305.4 266.3 305.4C265.1 305.4 263.1 309.8 261.2 312.7C259.3 315.6 256.7 319.9 255.0 323.0C253.3 326.1 253.3 328.1 250.9 331.2C248.5 334.3 243.7 338.8 240.6 341.5C237.5 344.2 235.2 345.3 232.4 347.7C229.6 350.1 227.3 352.0 224.0 355.9C220.7 359.8 216.0 367.2 212.4 371.0C208.8 374.8 207.5 377.2 202.7 378.8C197.9 380.4 189.8 379.4 183.4 380.7C177.0 382.0 170.1 385.7 164.0 386.5C157.9 387.3 150.9 386.2 146.7 385.6C142.5 385.0 141.3 384.5 139.0 382.7C136.7 380.9 134.0 377.3 133.0 375.0C132.0 372.7 132.2 371.9 133.0 369.0C133.8 366.1 137.3 363.9 138.0 357.6C138.7 351.4 138.8 337.1 137.0 331.5C135.2 325.9 130.6 322.7 127.4 323.8C124.2 324.9 119.4 330.5 117.8 338.0C116.2 345.5 118.4 365.4 117.8 369.0C117.2 372.6 115.6 363.3 114.0 359.5C112.4 355.7 110.3 349.9 108.0 346.0C105.7 342.1 102.3 339.5 100.4 336.3C98.5 333.1 96.5 330.2 96.5 326.7C96.5 323.1 101.4 318.9 100.4 315.0C99.4 311.1 92.9 306.0 90.7 303.5C88.5 301.0 88.6 301.4 87.0 300.0C85.4 298.6 83.9 297.3 81.0 294.8C78.1 292.3 72.4 288.6 69.5 285.0C66.6 281.4 65.8 278.0 63.7 273.5C61.6 269.0 58.6 263.1 57.0 258.0C55.4 252.9 54.2 248.2 54.0 242.7C53.8 237.2 55.4 229.7 56.0 225.0C56.6 220.3 56.7 216.8 57.7 214.7Z" fill="#aad3df"/>
<path d="M858.0 745.0C795.2 740.2 862.1 724.0 863.5 716.0C864.9 708.0 865.6 702.0 866.5 697.3C867.4 692.5 868.2 692.0 869.0 687.5C869.8 683.0 870.9 675.9 871.0 670.6C871.1 665.3 870.0 661.2 869.5 655.8C869.0 650.4 867.8 643.5 868.0 638.0C868.2 632.5 869.8 627.4 871.0 623.0C872.2 618.6 872.3 614.1 875.4 611.4C878.5 608.7 885.4 609.6 889.5 607.0C893.6 604.4 896.9 598.1 900.0 596.0C903.1 593.9 904.4 596.4 908.2 594.2C912.0 592.0 918.6 586.7 923.0 583.0C927.4 579.3 929.9 576.1 934.3 571.8C938.7 567.4 943.7 561.9 949.3 556.9C954.9 551.9 962.5 547.5 967.9 542.0C973.3 536.5 977.5 528.8 981.8 523.8C986.1 518.8 989.3 515.4 993.5 512.0C997.7 508.6 1002.2 506.2 1006.9 503.7C1011.6 501.2 1017.7 498.9 1021.9 497.0C1026.1 495.1 1028.9 494.2 1032.0 492.0C1035.1 489.8 1038.3 486.4 1040.3 483.6C1042.2 480.8 1044.0 478.1 1043.7 475.3C1043.4 472.5 1039.2 469.7 1038.6 466.9C1038.0 464.1 1038.9 460.7 1040.3 458.5C1041.7 456.3 1044.2 454.9 1047.0 453.5C1049.8 452.1 1053.7 451.3 1057.0 450.2C1060.3 449.1 1064.8 448.2 1067.0 446.8C1069.2 445.4 1069.6 441.3 1070.4 441.8C1071.2 442.3 1067.5 448.6 1072.0 450.0C1076.5 451.4 1092.2 450.2 1097.2 450.2C1102.2 450.2 1098.4 450.7 1102.0 450.0C1105.6 449.3 1113.4 446.8 1119.0 446.0C1124.6 445.2 1131.5 446.0 1135.7 445.0C1139.9 444.0 1142.3 442.2 1144.0 440.0C1145.7 437.8 1144.3 435.1 1145.7 431.8C1147.1 428.5 1149.9 421.4 1152.4 420.0C1154.9 418.6 1158.6 420.6 1160.8 423.4C1163.0 426.2 1164.4 432.1 1165.8 436.8C1167.2 441.5 1167.5 447.1 1169.2 451.8C1170.9 456.5 1173.7 461.0 1175.9 465.2C1178.1 469.4 1180.1 473.0 1182.6 476.9C1185.1 480.8 1188.4 485.0 1190.9 488.6C1193.4 492.2 1194.9 496.0 1197.6 498.7C1200.3 501.4 1199.9 501.4 1207.0 505.0C1214.1 508.6 1234.5 480.0 1240.0 520.0C1245.5 560.0 1303.7 707.5 1240.0 745.0C1176.3 782.5 920.8 749.8 858.0 745.0Z" fill="#aad3df"/>
<ellipse cx="1006.4" cy="183.8" rx="6.5" ry="3" fill="#aad3df" transform="rotate(15 1006.4 183.8)"/>
<ellipse cx="967" cy="171.5" rx="3" ry="2" fill="#aad3df" transform="rotate(0 967 171.5)"/>
<ellipse cx="898.5" cy="191" rx="4.5" ry="2.5" fill="#aad3df" transform="rotate(-10 898.5 191)"/>
<ellipse cx="940" cy="166.6" rx="3" ry="2" fill="#aad3df" transform="rotate(20 940 166.6)"/>
<ellipse cx="1134" cy="192.3" rx="9" ry="4.5" fill="#aad3df" transform="rotate(-8 1134 192.3)"/>
<ellipse cx="1090" cy="163" rx="5" ry="2.5" fill="#aad3df" transform="rotate(0 1090 163)"/>
<ellipse cx="1067.7" cy="172.7" rx="3.5" ry="2" fill="#aad3df" transform="rotate(30 1067.7 172.7)"/>
<ellipse cx="1035.8" cy="175" rx="3" ry="2" fill="#aad3df" transform="rotate(0 1035.8 175)"/>
<ellipse cx="994" cy="163" rx="2.5" ry="3" fill="#aad3df" transform="rotate(0 994 163)"/>
<ellipse cx="925.5" cy="182.5" rx="2.5" ry="2.5" fill="#aad3df" transform="rotate(0 925.5 182.5)"/>
<ellipse cx="1006.4" cy="245" rx="2" ry="3.5" fill="#aad3df" transform="rotate(0 1006.4 245)"/>
<ellipse cx="986.8" cy="204.6" rx="1.5" ry="3" fill="#aad3df" transform="rotate(-20 986.8 204.6)"/>
<ellipse cx="1111.9" cy="182.5" rx="4" ry="2" fill="#aad3df" transform="rotate(20 1111.9 182.5)"/>
<ellipse cx="1136.4" cy="239" rx="3" ry="2" fill="#aad3df" transform="rotate(0 1136.4 239)"/>
<ellipse cx="1124" cy="243.8" rx="2.5" ry="1.5" fill="#aad3df" transform="rotate(0 1124 243.8)"/>
<ellipse cx="1129" cy="254.9" rx="3.5" ry="1.5" fill="#aad3df" transform="rotate(0 1129 254.9)"/>
<ellipse cx="1150" cy="166" rx="6" ry="3" fill="#aad3df" transform="rotate(10 1150 166)"/>
<ellipse cx="1180" cy="170" rx="4" ry="2" fill="#aad3df" transform="rotate(0 1180 170)"/>
<ellipse cx="1060" cy="196" rx="2" ry="1.5" fill="#aad3df" transform="rotate(0 1060 196)"/>
<ellipse cx="958" cy="186" rx="2" ry="1.5" fill="#aad3df" transform="rotate(0 958 186)"/>
<ellipse cx="1024" cy="199" rx="2" ry="2.5" fill="#aad3df" transform="rotate(0 1024 199)"/>
<ellipse cx="1083" cy="190" rx="2" ry="1.5" fill="#aad3df" transform="rotate(0 1083 190)"/>
<ellipse cx="866" cy="405" rx="3" ry="1.5" fill="#aad3df" transform="rotate(30 866 405)"/>
<ellipse cx="862" cy="418" rx="2.5" ry="1.2" fill="#aad3df" transform="rotate(20 862 418)"/>
<ellipse cx="798" cy="410" rx="2.5" ry="1.5" fill="#aad3df" transform="rotate(0 798 410)"/>
<ellipse cx="705" cy="548" rx="2" ry="1.5" fill="#aad3df" transform="rotate(0 705 548)"/>
<ellipse cx="740" cy="500" rx="2.5" ry="1.5" fill="#aad3df" transform="rotate(20 740 500)"/>
<ellipse cx="823" cy="575" rx="2.5" ry="1.5" fill="#aad3df" transform="rotate(0 823 575)"/>
<ellipse cx="845" cy="618" rx="3" ry="1.5" fill="#aad3df" transform="rotate(30 845 618)"/>
<ellipse cx="916" cy="512" rx="2" ry="4" fill="#aad3df" transform="rotate(30 916 512)"/>
<ellipse cx="955" cy="480" rx="3" ry="1.5" fill="#aad3df" transform="rotate(0 955 480)"/>
<ellipse cx="803" cy="455" rx="2.5" ry="1.5" fill="#aad3df" transform="rotate(0 803 455)"/>
<ellipse cx="1000" cy="498" rx="4" ry="2" fill="#aad3df" transform="rotate(-30 1000 498)"/>
<ellipse cx="844.5" cy="186.2" rx="8" ry="4" fill="#9cc7f2" opacity=".85" transform="rotate(10 844.5 186.2)"/>
<ellipse cx="836" cy="181" rx="4" ry="2.5" fill="#9cc7f2" opacity=".85" transform="rotate(0 836 181)"/>
<ellipse cx="861.7" cy="196" rx="3" ry="2" fill="#9cc7f2" opacity=".85" transform="rotate(30 861.7 196)"/>
<ellipse cx="918" cy="207" rx="2.5" ry="2" fill="#9cc7f2" opacity=".85" transform="rotate(40 918 207)"/>
<ellipse cx="932.8" cy="216.9" rx="3" ry="2" fill="#9cc7f2" opacity=".85" transform="rotate(40 932.8 216.9)"/>
<ellipse cx="947.5" cy="250" rx="4" ry="1.8" fill="#9cc7f2" opacity=".85" transform="rotate(0 947.5 250)"/>
<ellipse cx="979.4" cy="256" rx="4" ry="2.5" fill="#9cc7f2" opacity=".85" transform="rotate(20 979.4 256)"/>
<ellipse cx="970" cy="251" rx="2.5" ry="1.5" fill="#9cc7f2" opacity=".85" transform="rotate(0 970 251)"/>
<ellipse cx="1008.9" cy="259.8" rx="3.5" ry="2.5" fill="#9cc7f2" opacity=".85" transform="rotate(0 1008.9 259.8)"/>
<ellipse cx="1033.4" cy="269.6" rx="4" ry="2.5" fill="#9cc7f2" opacity=".85" transform="rotate(0 1033.4 269.6)"/>
<ellipse cx="1043" cy="276" rx="2.5" ry="2" fill="#9cc7f2" opacity=".85" transform="rotate(0 1043 276)"/>
<ellipse cx="1070" cy="270.8" rx="3" ry="2" fill="#9cc7f2" opacity=".85" transform="rotate(0 1070 270.8)"/>
<ellipse cx="1085" cy="272" rx="2.5" ry="2" fill="#9cc7f2" opacity=".85" transform="rotate(0 1085 272)"/>
<ellipse cx="1121.7" cy="265.9" rx="3" ry="1.8" fill="#9cc7f2" opacity=".85" transform="rotate(0 1121.7 265.9)"/>
<ellipse cx="1167" cy="265" rx="2" ry="2" fill="#9cc7f2" opacity=".85" transform="rotate(0 1167 265)"/>
<ellipse cx="1188" cy="269.6" rx="2.5" ry="2" fill="#9cc7f2" opacity=".85" transform="rotate(0 1188 269.6)"/>
<ellipse cx="1110" cy="266" rx="2" ry="1.5" fill="#9cc7f2" opacity=".85" transform="rotate(0 1110 266)"/>
<path d="M383 172h10M384.5 174.5h8M386 169.5h6" stroke="#9fd0e8" stroke-width="1.1" fill="none"/>
<path d="M393 178h10M394.5 180.5h8M396 175.5h6" stroke="#9fd0e8" stroke-width="1.1" fill="none"/>
<path d="M378 220h10M379.5 222.5h8M381 217.5h6" stroke="#9fd0e8" stroke-width="1.1" fill="none"/>
<path d="M473 234h10M474.5 236.5h8M476 231.5h6" stroke="#9fd0e8" stroke-width="1.1" fill="none"/>
<path d="M424 265h10M425.5 267.5h8M427 262.5h6" stroke="#9fd0e8" stroke-width="1.1" fill="none"/>
<path d="M319 287h10M320.5 289.5h8M322 284.5h6" stroke="#9fd0e8" stroke-width="1.1" fill="none"/>
<path d="M242 450h10M243.5 452.5h8M245 447.5h6" stroke="#9fd0e8" stroke-width="1.1" fill="none"/>
<path d="M182.0 693.0C182.7 691.5 186.7 690.4 190.0 690.0C193.3 689.6 198.7 689.8 202.0 690.5C205.3 691.2 209.3 692.8 210.0 694.0C210.7 695.2 208.5 697.0 206.0 698.0C203.5 699.0 198.3 699.8 195.0 700.0C191.7 700.2 188.2 700.2 186.0 699.0C183.8 697.8 181.3 694.5 182.0 693.0Z" fill="#f2efe9"/>
<path d="M109.0 716.0C106.3 715.2 110.3 712.5 112.0 711.5C113.7 710.5 116.7 709.9 119.0 710.0C121.3 710.1 124.5 711.0 126.0 712.0C127.5 713.0 130.8 715.3 128.0 716.0C125.2 716.7 111.7 716.8 109.0 716.0Z" fill="#f2efe9"/>
<path d="M150.0 702.5C150.3 702.2 152.3 702.7 153.0 703.0C153.7 703.3 154.3 704.2 154.0 704.5C153.7 704.8 151.7 704.8 151.0 704.5C150.3 704.2 149.7 702.8 150.0 702.5Z" fill="#f2efe9"/>
<path d="M319.0 480.0C319.7 477.8 321.2 476.8 322.0 477.0C322.8 477.2 324.2 479.0 324.0 481.0C323.8 483.0 322.0 487.5 321.0 489.0C320.0 490.5 318.3 491.5 318.0 490.0C317.7 488.5 318.3 482.2 319.0 480.0Z" fill="#f2efe9"/>
<path d="M109.0 322.0C109.5 320.8 111.0 320.0 111.5 321.0C112.0 322.0 112.2 326.0 112.0 328.0C111.8 330.0 110.6 333.0 110.0 333.0C109.4 333.0 108.7 329.8 108.5 328.0C108.3 326.2 108.5 323.2 109.0 322.0Z" fill="#f2efe9"/>
<path d="M232.0 313.0C233.0 312.2 237.2 311.4 240.0 310.5C242.8 309.6 247.2 307.8 249.0 307.5C250.8 307.2 252.0 308.1 251.0 309.0C250.0 309.9 245.8 311.9 243.0 313.0C240.2 314.1 235.8 315.5 234.0 315.5C232.2 315.5 231.0 313.8 232.0 313.0Z" fill="#f2efe9"/>
<path d="M1188.0 672.0C1188.6 668.8 1190.8 667.0 1192.0 667.0C1193.2 667.0 1194.8 669.2 1195.0 672.0C1195.2 674.8 1194.0 679.3 1193.5 684.0C1193.0 688.7 1192.8 694.7 1192.0 700.0C1191.2 705.3 1190.1 713.3 1189.0 716.0C1187.9 718.7 1185.8 718.7 1185.5 716.0C1185.2 713.3 1186.5 705.0 1187.0 700.0C1187.5 695.0 1188.3 690.7 1188.5 686.0C1188.7 681.3 1187.4 675.2 1188.0 672.0Z" fill="#cfe3bd"/>
<g stroke="#e3ecec" stroke-opacity=".22" stroke-width="1" fill="none"><path d="M255.5 160V715M543.5 160V715M831.5 160V715M1119.500 160V715M8 442.500H1206"/></g>
<g fill="none" stroke-linejoin="round" stroke-linecap="round">
<path d="M373.0 160.0 L373.4 168.5 L380.6 169.8 L388.1 169.4 L395.2 171.4 L398.1 184.0 L393.7 190.9 L389.0 197.5 L383.2 203.4 L378.5 210.0 L374.0 216.8" stroke="#bea3b9" stroke-width="1.7" stroke-opacity=".95"/>
<path d="M374.0 216.8 L381.6 220.3 L390.1 221.3 L397.8 224.7 L406.0 226.6 L413.6 230.3 L421.3 229.1 L429.0 229.2 L436.6 227.5 L444.4 228.0 L456.0 230.3 L467.6 224.9 L481.1 226.0 L489.1 222.8 L497.6 221.2 L505.7 218.4 L513.9 215.8 L514.9 211.0 L512.8 203.4 L512.0 195.5 L515.9 184.0 L523.7 179.3 L531.3 174.3 L541.0 174.5 L550.6 173.3 L548.7 166.6 L555.5 163.4 L563.1 162.8 L570.0 160.0" stroke="#bea3b9" stroke-width="1.7" stroke-opacity=".95"/>
<path d="M374.0 216.8 L378.5 224.8 L384.0 232.1 L388.5 240.0 L393.9 245.3 L398.1 251.5 L405.3 257.2 L413.6 261.2 L422.2 264.0 L422.9 272.7 L423.8 281.3 L423.2 290.0 L434.8 294.0 L434.7 301.8 L432.9 309.3 L425.0 310.5 L417.4 312.9 L409.7 315.0 L400.0 321.0 L398.0 334.4 L393.3 338.3 L392.0 345.9 L391.5 353.7 L391.4 361.4" stroke="#bea3b9" stroke-width="1.7" stroke-opacity=".95"/>
<path d="M723.8 160.0 L725.2 168.1 L726.7 176.2 L720.8 181.3 L716.6 188.0 L711.3 193.6 L709.2 201.3 L707.4 209.0 L700.4 211.2 L693.9 214.8 L690.7 223.4 L688.0 232.2 L680.4 241.9 L673.3 245.1 L666.9 249.6 L661.9 256.2 L657.2 263.0 L653.4 270.8 L645.5 272.8 L637.9 275.7 L626.3 276.6 L620.5 270.8 L609.0 274.7 L603.8 283.0 L597.0 290.0 L595.4 299.7 L605.0 309.3 L610.9 319.0 L612.8 332.5 L624.4 338.3 L627.9 345.8 L630.2 353.7 L633.0 360.3 L635.0 367.2 L634.0 375.0 L624.4 375.0 L618.6 376.9 L611.1 379.3 L603.2 379.8 L591.6 376.9 L583.0 378.0 L577.6 377.0 L575.7 386.5 L568.1 389.0 L560.3 390.4 L554.5 401.0" stroke="#bea3b9" stroke-width="1.7" stroke-opacity=".95"/>
<path d="M830.0 160.0 L836.4 165.6 L841.5 172.4 L850.3 180.0 L857.5 185.1 L864.0 191.0 L875.0 199.0 L884.0 206.0" stroke="#bea3b9" stroke-width="1.7" stroke-opacity=".95"/>
<path d="M884.0 206.0 L891.3 203.8 L898.4 201.0 L907.2 201.7 L916.0 203.0 L923.8 209.4 L931.3 216.3 L939.3 220.6 L946.6 226.0 L955.3 236.0 L967.0 233.5 L971.7 240.0 L975.5 247.0 L984.0 250.7 L993.0 252.5 L1000.0 260.5 L1010.0 262.0 L1018.9 265.3 L1028.0 268.0 L1035.4 270.8 L1043.0 273.2 L1051.6 273.1 L1060.0 274.5 L1071.3 271.0 L1084.4 268.0 L1091.0 274.3 L1095.0 279.5 L1101.0 274.1 L1106.3 268.0 L1114.6 266.3 L1123.0 266.0 L1131.0 267.2 L1139.0 269.0 L1146.8 271.8 L1155.0 272.5 L1166.0 279.0 L1176.3 275.0 L1182.8 271.3 L1189.0 267.0 L1197.6 261.6 L1206.0 256.0" stroke="#bea3b9" stroke-width="1.7" stroke-opacity=".95"/>
<path d="M884.0 206.0 L878.2 213.8 L873.0 222.0 L869.3 229.2 L867.0 237.0 L866.0 246.0 L872.4 250.2 L879.6 252.8 L886.0 257.0 L894.5 260.6 L902.0 266.0 L909.4 268.6 L916.6 271.5 L923.6 275.0 L931.3 277.9 L938.1 282.9 L946.0 285.5 L955.1 288.1 L964.6 289.0 L971.0 292.1 L976.9 296.2 L983.3 299.3 L993.2 300.9 L1003.0 303.0 L1009.8 306.3 L1017.2 307.8 L1024.3 310.4 L1031.7 312.3 L1038.9 314.6 L1046.0 317.5 L1053.0 316.8 L1059.9 315.3 L1067.0 315.0 L1068.4 307.2 L1069.5 299.3 L1070.8 292.3 L1070.2 285.1 L1070.2 278.0 L1071.3 271.0" stroke="#bea3b9" stroke-width="1.7" stroke-opacity=".95"/>
<path d="M1095.0 279.5 L1093.2 292.9 L1099.0 299.2 L1106.3 303.8 L1115.1 304.6 L1123.9 304.4 L1132.6 306.0 L1139.9 305.0 L1147.2 305.1 L1154.5 306.0 L1163.3 304.1 L1172.0 301.6 L1173.7 294.0 L1174.2 286.3 L1166.0 279.0" stroke="#bea3b9" stroke-width="1.7" stroke-opacity=".95"/>
<path d="M1096.7 450.0 L1094.5 436.9 L1092.2 428.4 L1090.3 419.8 L1089.3 411.2 L1090.3 402.7 L1086.9 394.2 L1083.9 385.5 L1081.7 374.9 L1076.1 368.6 L1069.0 364.0 L1073.0 351.3 L1079.5 347.1 L1086.0 342.8 L1092.2 335.9 L1096.7 327.8 L1104.0 330.7 L1111.7 332.0 L1114.9 340.3 L1116.0 349.2 L1124.0 350.2 L1132.0 350.6 L1140.0 350.9 L1148.0 351.3 L1156.6 350.8 L1165.1 351.6 L1173.7 351.3 L1178.0 364.2 L1172.0 369.2 L1165.0 372.7 L1154.4 381.3 L1153.5 390.9 L1152.3 400.5 L1157.7 406.8 L1163.0 413.3 L1170.9 411.1 L1178.0 407.0 L1180.4 414.8 L1184.4 421.9 L1187.0 430.3 L1188.6 439.0 L1190.3 447.0 L1192.0 455.0 L1189.7 462.8 L1186.0 470.0" stroke="#bea3b9" stroke-width="1.7" stroke-opacity=".95"/>
<path d="M1206.0 345.0 L1202.1 354.7 L1200.0 365.0 L1200.5 373.5 L1203.1 381.6 L1204.0 390.0 L1201.0 396.6 L1198.4 403.2 L1196.0 410.0 L1197.8 417.2 L1197.4 424.7 L1199.0 432.0 L1196.4 442.0 L1194.0 452.0 L1190.0 462.0" stroke="#bea3b9" stroke-width="1.7" stroke-opacity=".95"/>
<path d="M50.0 160.0 L45.5 165.7 L42.0 172.0 L38.9 179.0 L36.0 186.0 L34.0 193.4 L30.0 200.0 L38.0 204.0 L45.1 204.6 L52.0 206.0 L60.0 210.0" stroke="#bea3b9" stroke-width="1.7" stroke-opacity=".95"/>
<path d="M8.0 205.0 L20.0 212.0 L25.8 217.3 L30.0 224.0 L33.2 230.5 L38.0 236.0 L50.0 238.0 L55.0 234.0" stroke="#bea3b9" stroke-width="1.7" stroke-opacity=".95"/>
<path d="M30.0 224.0 L20.0 232.0 L10.0 240.0 L8.0 241.0" stroke="#bea3b9" stroke-width="1.7" stroke-opacity=".95"/>
<path d="M38.0 236.0 L40.0 244.0 L50.0 246.0 L55.0 245.0" stroke="#bea3b9" stroke-width="1.7" stroke-opacity=".95"/>
<path d="M118.0 368.0 L126.0 372.0 L132.0 370.0" stroke="#bea3b9" stroke-width="1.7" stroke-opacity=".95"/>
<path d="M133.0 378.0 L136.3 384.5 L141.0 390.0 L145.8 396.4 L151.9 401.5 L157.6 407.0 L162.2 413.5 L170.5 415.4 L179.0 416.7 L187.7 416.0 L196.0 418.0 L203.8 419.2 L211.6 419.5 L219.2 422.2 L227.0 422.8" stroke="#bea3b9" stroke-width="1.7" stroke-opacity=".95"/>
<path d="M227.0 422.8 L231.0 412.0 L234.9 405.8 L236.9 398.8 L241.0 392.7 L238.0 384.0 L244.0 378.0 L240.0 370.0 L247.0 364.0 L252.0 355.0 L257.0 346.0 L260.0 338.0" stroke="#bea3b9" stroke-width="1.7" stroke-opacity=".95"/>
<path d="M262.0 318.0 L266.0 322.0 L268.0 316.0" stroke="#bea3b9" stroke-width="1.7" stroke-opacity=".95"/>
<path d="M227.0 422.8 L231.7 428.9 L236.2 435.2 L241.0 441.3 L239.3 448.2 L235.9 454.6 L234.7 461.7 L233.0 468.6 L230.2 475.1 L227.6 481.8 L226.6 488.9 L223.8 495.5 L217.0 498.3 L209.5 499.4 L202.9 502.5 L196.1 505.4 L189.1 507.7 L182.4 511.0 L175.4 513.2 L168.4 515.4 L161.2 517.3 L154.5 520.5 L147.4 522.4" stroke="#bea3b9" stroke-width="1.7" stroke-opacity=".95"/>
<path d="M147.4 522.4 L140.4 523.9 L133.4 525.2 L126.1 524.9 L119.2 526.7 L112.0 527.0 L104.3 527.1 L96.7 528.1 L89.3 530.8 L81.7 531.3 L74.0 531.7 L65.8 535.5 L58.0 540.0 L46.3 545.6 L41.7 553.2 L36.0 560.0 L32.6 567.1 L27.8 573.4 L22.0 578.0 L15.0 572.0 L8.0 564.0" stroke="#bea3b9" stroke-width="1.7" stroke-opacity=".95"/>
<path d="M147.4 522.4 L150.0 531.3 L154.3 539.5 L158.0 548.0 L161.4 556.0 L164.1 564.2 L168.0 572.0 L171.4 581.1 L176.0 589.6" stroke="#bea3b9" stroke-width="1.7" stroke-opacity=".95"/>
<path d="M426.0 160.0 L427.7 168.9 L428.0 178.0 L426.2 185.6 L422.8 192.7 L420.0 200.0 L418.2 207.5 L416.0 215.0 L415.1 222.5 L414.0 230.0" stroke="#c8b2cb" stroke-width="1" stroke-opacity=".75"/>
<path d="M461.0 160.0 L460.2 167.5 L460.1 175.0 L459.2 182.5 L460.0 190.0 L460.2 197.4 L458.9 204.7 L458.0 212.0 L457.9 221.0 L457.0 230.0" stroke="#c8b2cb" stroke-width="1" stroke-opacity=".75"/>
<path d="M408.0 160.0 L402.4 165.5 L398.0 172.0" stroke="#c8b2cb" stroke-width="1" stroke-opacity=".75"/>
<path d="M8.0 176.0 L15.2 174.1 L22.5 172.7 L30.0 172.0 L37.3 167.9 L44.6 163.8 L52.0 160.0" stroke="#c8b2cb" stroke-width="1" stroke-opacity=".75"/>
<path d="M96.0 160.0 L98.5 168.9 L100.0 178.0 L108.0 186.0 L106.5 193.2 L104.0 200.0 L107.2 206.5 L112.0 212.0 L124.0 218.0 L128.1 224.9 L132.0 232.0 L138.4 239.6 L146.0 246.0 L147.9 254.0 L150.0 262.0 L155.9 270.5 L160.0 280.0 L164.2 286.7 L170.0 292.0" stroke="#c8b2cb" stroke-width="1" stroke-opacity=".75"/>
<path d="M136.0 160.0 L140.1 165.8 L144.6 171.3 L150.0 176.0 L158.7 179.9 L168.0 182.0 L171.3 189.4 L176.0 196.0 L183.0 198.7 L189.3 202.6 L196.0 206.0 L201.5 213.7 L206.0 222.0 L205.2 229.0 L204.0 236.0 L209.7 240.3 L214.0 246.0 L222.0 245.7 L230.0 246.0 L234.2 252.7 L240.0 258.0 L236.0 270.0 L229.2 273.5 L222.0 276.0 L213.7 279.4 L206.0 284.0 L198.0 287.1 L190.0 290.0 L183.0 292.2 L176.0 294.0" stroke="#c8b2cb" stroke-width="1" stroke-opacity=".75"/>
<path d="M176.0 160.0 L170.0 170.0 L173.2 176.6 L178.0 182.0" stroke="#c8b2cb" stroke-width="1" stroke-opacity=".75"/>
<path d="M196.0 206.0 L204.5 203.0 L212.0 198.0 L218.1 192.1 L224.0 186.0 L232.3 181.4 L240.0 176.0 L248.7 171.3 L258.0 168.0 L264.8 163.6 L272.0 160.0" stroke="#c8b2cb" stroke-width="1" stroke-opacity=".75"/>
<path d="M240.0 258.0 L250.0 262.0 L262.0 262.0 L268.0 272.0 L280.0 276.0 L281.0 283.3 L284.0 290.0 L296.0 296.0 L297.8 303.0 L300.0 310.0 L305.9 316.1 L312.0 322.0 L314.5 329.2 L318.0 336.0 L322.0 342.0" stroke="#c8b2cb" stroke-width="1" stroke-opacity=".75"/>
<path d="M290.0 160.0 L297.6 165.3 L304.0 172.0 L311.9 178.1 L320.0 184.0 L327.0 190.0 L334.0 196.0 L335.2 206.2 L338.0 216.0 L338.1 224.1 L335.7 231.9 L336.0 240.0 L338.9 247.8 L340.0 256.0 L334.0 266.0 L322.0 270.0 L323.7 276.9 L324.0 284.0 L318.0 296.0 L319.8 303.1 L322.0 310.0 L325.7 316.2 L330.0 322.0 L331.2 329.6 L332.2 337.3 L332.0 345.0" stroke="#c8b2cb" stroke-width="1" stroke-opacity=".75"/>
<path d="M334.0 196.0 L342.4 192.8 L350.0 188.0 L354.6 181.6 L360.0 176.0 L365.1 171.1 L370.0 166.0 L373.0 160.0" stroke="#c8b2cb" stroke-width="1" stroke-opacity=".75"/>
<path d="M8.0 514.0 L15.3 514.3 L22.7 513.8 L30.0 514.2 L37.3 514.1 L44.7 515.0 L52.0 513.3 L59.4 514.5 L66.7 513.4 L74.0 513.8 L81.4 514.4 L88.7 513.6 L96.0 513.6 L103.4 514.6 L110.7 513.1 L118.1 513.9 L125.4 515.1 L132.7 515.1 L140.1 513.1 L147.4 514.0 L147.4 522.4" stroke="#c8b2cb" stroke-width="1" stroke-opacity=".75"/>
<path d="M8.0 288.0 L16.3 291.4 L24.0 296.0 L29.4 303.7 L34.0 312.0 L36.1 321.3 L40.0 330.0 L40.2 340.1 L42.0 350.0 L43.9 357.6 L47.6 364.6 L50.0 372.0 L51.3 378.9 L50.3 386.1 L51.1 393.0 L52.0 400.0 L50.8 407.5 L48.9 414.9 L48.7 422.5 L48.0 430.0 L50.4 437.1 L50.0 444.8 L52.0 452.0 L49.4 461.1 L46.0 470.0 L42.7 479.9 L40.0 490.0 L36.4 497.7 L35.4 506.3 L32.0 514.0" stroke="#c8b2cb" stroke-width="1" stroke-opacity=".75"/>
<path d="M223.8 495.5 L230.6 503.2 L236.0 512.0 L241.7 519.5 L246.0 528.0 L250.9 537.1 L256.0 546.0 L260.0 551.0" stroke="#c8b2cb" stroke-width="1" stroke-opacity=".75"/>
<path d="M241.0 441.3 L247.9 439.0 L255.1 438.0 L262.0 436.0 L265.6 444.2 L270.0 452.0 L278.9 454.7 L287.2 458.9 L296.0 462.0 L304.9 459.5 L314.0 458.0 L320.0 448.0 L330.0 452.0 L336.0 448.0" stroke="#c8b2cb" stroke-width="1" stroke-opacity=".75"/>
<path d="M270.0 452.0 L270.6 444.7 L272.2 437.4 L272.0 430.0 L276.7 422.3 L280.0 414.0 L285.4 408.3 L292.0 404.0 L293.8 397.0 L296.0 390.0" stroke="#c8b2cb" stroke-width="1" stroke-opacity=".75"/>
<path d="M296.0 462.0 L296.2 454.6 L296.2 447.2 L298.0 440.0 L301.2 433.6 L303.6 426.8 L306.0 420.0 L310.6 411.7 L316.0 404.0" stroke="#c8b2cb" stroke-width="1" stroke-opacity=".75"/>
<path d="M262.0 436.0 L256.0 424.0 L252.4 417.7 L248.0 412.0" stroke="#c8b2cb" stroke-width="1" stroke-opacity=".75"/>
<path d="M74.0 531.7 L71.9 541.8 L70.0 552.0 L67.2 562.0 L64.0 572.0 L61.0 580.5 L56.0 588.0 L58.9 596.8 L60.0 606.0 L66.4 613.6 L74.0 620.0 L78.2 628.5 L84.0 636.0" stroke="#c8b2cb" stroke-width="1" stroke-opacity=".75"/>
<path d="M8.0 600.0 L20.0 596.0 L24.1 588.0 L28.0 580.0" stroke="#c8b2cb" stroke-width="1" stroke-opacity=".75"/>
<path d="M8.0 626.0 L14.8 628.7 L22.0 630.0 L22.3 637.5 L23.8 644.9 L24.3 652.4 L24.0 660.0" stroke="#c8b2cb" stroke-width="1" stroke-opacity=".75"/>
<path d="M56.0 588.0 L50.3 594.3 L44.0 600.0 L40.2 607.7 L38.0 616.0 L41.4 624.3 L46.0 632.0 L51.5 637.6 L58.0 642.0 L66.0 652.0" stroke="#c8b2cb" stroke-width="1" stroke-opacity=".75"/>
<path d="M514.0 211.0 L521.5 217.2 L530.0 222.0 L535.5 229.7 L540.0 238.0 L546.4 243.6 L552.0 250.0 L559.4 253.2 L566.0 258.0 L572.8 260.6 L580.0 262.0 L588.2 260.8 L596.0 258.0 L603.1 259.8 L610.0 262.0 L618.0 270.0" stroke="#c8b2cb" stroke-width="1" stroke-opacity=".75"/>
<path d="M566.0 258.0 L562.8 264.9 L560.0 272.0 L554.5 277.6 L548.0 282.0 L546.1 290.9 L546.0 300.0 L548.2 309.3 L552.0 318.0 L549.0 326.8 L548.0 336.0 L543.4 342.7 L540.0 350.0 L532.0 358.0" stroke="#c8b2cb" stroke-width="1" stroke-opacity=".75"/>
<path d="M570.0 160.0 L574.4 166.5 L580.0 172.0 L588.3 173.0 L596.0 176.0 L603.2 173.5 L610.0 170.0 L618.2 173.7 L626.0 178.0 L633.4 175.9 L640.0 172.0 L646.5 166.5 L652.0 160.0" stroke="#c8b2cb" stroke-width="1" stroke-opacity=".75"/>
<path d="M610.0 262.0 L608.8 254.8 L606.0 248.0 L609.6 240.2 L612.0 232.0 L616.6 226.6 L622.0 222.0 L624.6 214.2 L626.0 206.0 L630.4 200.4 L636.0 196.0 L635.8 187.9 L634.0 180.0 L626.0 178.0" stroke="#c8b2cb" stroke-width="1" stroke-opacity=".75"/>
<path d="M707.0 206.0 L712.9 210.3 L719.8 212.8 L725.8 217.0 L737.0 224.6 L744.1 230.8 L752.0 235.8 L757.6 243.2 L763.0 250.7 L767.2 258.0 L770.6 265.7 L780.0 272.0 L785.5 276.9" stroke="#c8b2cb" stroke-width="1" stroke-opacity=".75"/>
<path d="M737.0 224.6 L748.0 218.0 L755.2 216.6 L762.0 214.0 L772.0 206.0 L780.0 196.0 L792.0 192.0 L800.0 184.0" stroke="#c8b2cb" stroke-width="1" stroke-opacity=".75"/>
<path d="M759.0 160.0 L764.9 165.6 L770.0 172.0 L775.7 176.3 L780.0 182.0 L786.4 186.5 L792.0 192.0 L799.1 193.6 L806.0 196.0 L810.4 201.6 L816.0 206.0 L822.6 209.9 L830.0 212.0 L836.3 216.6 L842.0 222.0 L846.8 228.2 L852.0 234.0 L859.1 239.8 L866.0 246.0" stroke="#c8b2cb" stroke-width="1" stroke-opacity=".75"/>
<path d="M800.0 184.0 L812.0 178.0 L824.0 184.0 L836.0 178.0 L841.5 172.4" stroke="#c8b2cb" stroke-width="1" stroke-opacity=".75"/>
<path d="M785.5 276.9 L788.8 269.8 L790.0 262.0 L798.0 258.0 L796.0 270.0 L792.0 280.0 L796.1 289.5 L800.4 299.0 L807.5 303.7 L815.4 306.7 L806.0 314.0 L797.7 316.8 L789.0 318.0 L780.0 328.0 L774.0 336.6 L776.0 350.0 L778.0 359.0 L766.0 366.0 L758.7 367.0 L752.0 370.0 L740.0 364.0 L733.0 362.7 L722.0 370.0 L719.6 377.3 L716.0 384.0 L718.1 391.4 L722.0 398.0 L716.0 410.0 L721.0 415.5 L717.4 422.5 L713.0 429.0 L713.0 440.0" stroke="#c8b2cb" stroke-width="1" stroke-opacity=".75"/>
<path d="M636.0 367.0 L642.9 365.6 L650.0 366.0 L657.5 366.4 L665.0 367.0 L676.5 373.0 L683.9 380.1 L692.0 386.5 L699.7 394.0 L706.0 384.0 L716.0 384.0" stroke="#c8b2cb" stroke-width="1" stroke-opacity=".75"/>
<path d="M815.4 306.7 L826.0 312.0 L834.0 318.0 L832.4 325.1 L830.0 332.0 L830.0 344.0 L838.0 352.0 L849.0 359.0 L862.0 354.0 L870.4 353.0 L878.8 351.5 L890.0 356.0 L901.0 359.0 L912.0 362.0 L923.6 366.4 L930.0 376.0 L940.0 372.0 L946.7 369.2 L953.4 366.4" stroke="#c8b2cb" stroke-width="1" stroke-opacity=".75"/>
<path d="M964.6 289.0 L965.6 297.8 L966.0 306.7 L972.0 316.0 L968.4 325.4 L963.1 330.6 L958.0 336.0 L954.3 342.2 L949.7 347.8 L950.0 358.0 L953.4 366.4 L964.0 372.0 L975.8 373.9 L983.1 371.4 L990.0 368.0 L998.0 367.9 L1005.7 370.0 L1012.5 373.9 L1020.0 376.0 L1027.8 375.0 L1035.5 373.9 L1042.8 373.4 L1050.0 372.0 L1061.6 366.4 L1066.0 356.0 L1069.0 344.0 L1074.0 332.0 L1077.5 325.2 L1080.0 318.0" stroke="#c8b2cb" stroke-width="1" stroke-opacity=".75"/>
<path d="M953.4 366.4 L950.4 373.1 L948.0 380.0 L944.2 386.2 L940.0 392.0 L942.9 399.8 L944.0 408.0 L939.7 413.8 L936.0 420.0 L938.4 426.9 L940.0 434.0 L950.0 440.0 L946.0 452.0" stroke="#c8b2cb" stroke-width="1" stroke-opacity=".75"/>
<path d="M975.8 373.9 L972.0 386.0 L976.3 391.8 L980.0 398.0 L990.0 404.0 L1000.0 412.0 L1012.0 410.0 L1017.6 414.6 L1024.0 418.0 L1036.0 414.0 L1046.0 420.0 L1050.0 432.0 L1060.0 440.0 L1066.0 446.0" stroke="#c8b2cb" stroke-width="1" stroke-opacity=".75"/>
<path d="M1061.6 366.4 L1058.4 373.0 L1056.0 380.0 L1051.3 385.3 L1046.0 390.0 L1040.0 402.0 L1043.4 410.9 L1046.0 420.0" stroke="#c8b2cb" stroke-width="1" stroke-opacity=".75"/>
<path d="M713.0 440.0 L720.0 452.0 L716.0 464.0 L706.0 470.0 L700.0 482.0 L694.0 492.0 L686.0 496.0 L680.0 492.0" stroke="#c8b2cb" stroke-width="1" stroke-opacity=".75"/>
<path d="M720.0 452.0 L728.0 449.8 L736.0 448.0 L743.1 450.8 L750.0 454.0 L757.9 451.6 L766.0 450.0 L773.3 452.2 L780.0 456.0 L788.0 453.8 L796.0 452.0 L803.8 454.9 L812.0 456.0 L819.2 453.4 L826.0 450.0 L832.7 453.8 L840.0 456.0 L848.1 454.2 L856.0 452.0 L863.2 454.6 L870.0 458.0 L877.0 455.1 L884.0 452.0 L896.0 446.0 L902.7 442.9 L910.0 442.0 L916.8 438.6 L924.0 436.0 L929.9 427.9 L936.0 420.0" stroke="#c8b2cb" stroke-width="1" stroke-opacity=".75"/>
<path d="M884.0 452.0 L885.8 460.0 L888.0 468.0 L883.7 474.8 L880.0 482.0 L882.1 490.0 L884.0 498.0 L880.1 505.1 L876.0 512.0 L878.6 519.8 L880.0 528.0 L876.0 534.0 L872.0 540.0 L873.1 548.2 L876.0 556.0 L871.5 561.6 L868.0 568.0 L872.0 580.0 L880.0 588.0" stroke="#c8b2cb" stroke-width="1" stroke-opacity=".75"/>
<path d="M946.0 452.0 L943.7 459.3 L940.0 466.0 L944.8 472.5 L948.0 480.0 L944.0 487.0 L940.0 494.0 L934.8 498.8 L930.0 504.0 L932.3 510.9 L934.0 518.0 L928.5 523.6 L924.0 530.0 L917.6 534.6 L912.0 540.0 L908.7 546.9 L906.0 554.0 L901.5 560.4 L896.0 566.0 L888.0 576.0 L884.6 582.4 L880.0 588.0" stroke="#c8b2cb" stroke-width="1" stroke-opacity=".75"/>
<path d="M880.0 588.0 L874.6 592.9 L868.0 596.0 L856.0 600.0 L846.0 596.0 L836.0 604.0 L824.0 606.0 L814.0 612.0 L806.0 606.0 L798.0 612.0" stroke="#c8b2cb" stroke-width="1" stroke-opacity=".75"/>
<path d="M872.0 540.0 L864.8 538.5 L858.0 536.0 L846.0 542.0 L839.0 540.1 L832.0 538.0 L820.0 544.0 L810.0 540.0 L806.0 552.0 L802.3 558.7 L800.0 566.0 L802.9 572.7 L804.0 580.0 L800.2 586.1 L796.0 592.0 L796.7 602.0 L798.0 612.0" stroke="#c8b2cb" stroke-width="1" stroke-opacity=".75"/>
<path d="M810.0 540.0 L798.0 534.0 L790.0 524.0 L783.2 526.6 L776.0 528.0 L769.8 531.6 L764.0 536.0 L760.0 542.0 L756.0 548.0 L750.3 552.5 L744.0 556.0 L736.0 566.0 L726.0 572.0 L720.0 584.0 L712.0 590.0 L704.0 600.0 L700.0 604.0" stroke="#c8b2cb" stroke-width="1" stroke-opacity=".75"/>
<path d="M798.0 612.0 L793.7 617.8 L790.0 624.0 L793.0 630.7 L794.0 638.0 L789.5 643.7 L786.0 650.0 L787.4 657.2 L790.0 664.0 L800.0 670.0 L812.0 666.0 L824.0 672.0 L836.0 668.0 L843.2 669.2 L850.0 672.0 L862.0 668.0 L869.0 664.0" stroke="#c8b2cb" stroke-width="1" stroke-opacity=".75"/>
<path d="M790.0 664.0 L784.0 676.0 L787.2 682.9 L790.0 690.0 L795.5 694.5 L800.0 700.0 L812.0 706.0 L819.3 705.0 L826.0 702.0 L838.0 708.0 L850.0 704.0 L860.0 710.0 L864.0 715.0" stroke="#c8b2cb" stroke-width="1" stroke-opacity=".75"/>
<path d="M784.0 676.0 L778.0 680.0 L772.0 684.0 L768.8 690.5 L764.0 696.0 L758.0 708.0 L756.0 715.0" stroke="#c8b2cb" stroke-width="1" stroke-opacity=".75"/>
<path d="M1080.0 318.0 L1086.0 330.0 L1096.7 327.8" stroke="#c8b2cb" stroke-width="1" stroke-opacity=".75"/>
<path d="M1111.7 332.0 L1124.0 326.0 L1131.9 324.5 L1140.0 324.0 L1147.8 326.7 L1156.0 328.0 L1163.0 325.9 L1170.0 324.0 L1178.2 322.6 L1186.0 320.0 L1196.0 321.4 L1206.0 322.0" stroke="#c8b2cb" stroke-width="1" stroke-opacity=".75"/>
<path d="M1148.0 351.3 L1152.0 340.0 L1156.0 328.0" stroke="#c8b2cb" stroke-width="1" stroke-opacity=".75"/>
<path d="M1178.0 364.2 L1190.0 360.0 L1200.0 365.0" stroke="#c8b2cb" stroke-width="1" stroke-opacity=".75"/>
<path d="M1178.0 407.0 L1186.0 398.0 L1190.2 404.7 L1196.0 410.0" stroke="#c8b2cb" stroke-width="1" stroke-opacity=".75"/>
<path d="M1206.0 215.0 L1197.9 218.3 L1190.0 222.0 L1181.2 219.0 L1172.0 218.0 L1165.4 222.3 L1160.0 228.0 L1154.8 233.8 L1150.0 240.0 L1142.8 242.6 L1136.0 246.0 L1128.0 244.0 L1120.0 242.0 L1112.6 245.4 L1106.0 250.0 L1100.4 255.9 L1095.0 262.0" stroke="#c8b2cb" stroke-width="1" stroke-opacity=".75"/>
<path d="M1000.0 160.0 L1002.2 168.3 L1006.0 176.0 L1002.5 183.8 L1000.0 192.0 L1004.0 200.0 L1008.0 208.0 L1005.5 216.2 L1002.0 224.0 L1006.5 231.8 L1010.0 240.0 L1007.7 247.9 L1006.0 256.0 L1010.0 262.0" stroke="#c8b2cb" stroke-width="1" stroke-opacity=".75"/>
<path d="M57.8 217.0C59.8 217.2 66.0 217.7 70.0 218.0C74.0 218.3 78.3 216.7 82.0 219.0C85.7 221.3 88.9 227.9 92.0 232.0C95.1 236.1 97.4 239.0 100.7 243.3C104.0 247.6 108.3 253.1 112.0 258.0C115.7 262.9 118.3 268.7 123.0 273.0C127.7 277.3 133.8 280.2 140.0 284.0C146.2 287.8 154.1 291.7 160.4 295.5C166.7 299.3 172.4 303.2 178.0 307.0C183.6 310.8 189.7 314.2 194.0 318.0C198.3 321.8 201.5 326.9 204.0 330.0C206.5 333.1 206.3 336.4 209.0 336.6C211.7 336.8 216.3 332.9 220.0 331.0C223.7 329.1 227.3 327.6 231.3 325.4C235.3 323.2 239.6 320.5 244.0 318.0C248.4 315.5 253.7 312.9 257.5 310.4C261.3 307.9 264.7 303.1 266.8 303.0C268.9 302.9 269.1 307.5 270.0 310.0C270.9 312.5 271.6 315.0 272.4 318.0C273.2 321.0 274.1 324.9 275.0 328.0C275.9 331.1 275.8 334.4 278.0 336.6C280.2 338.8 284.6 339.8 288.0 341.0C291.4 342.2 293.8 342.8 298.5 344.0C303.2 345.2 309.8 346.8 316.0 348.0C322.2 349.2 329.5 350.5 335.8 351.5C342.1 352.5 347.8 353.1 354.0 354.0C360.2 354.9 366.8 355.8 373.0 357.0C379.2 358.2 385.2 360.8 391.4 361.4C397.6 362.0 403.7 360.8 410.0 360.5C416.3 360.2 422.3 359.8 429.0 359.5C435.7 359.2 443.2 359.2 450.0 359.0C456.8 358.8 463.8 358.9 469.5 358.0C475.2 357.1 478.9 353.4 484.0 353.7C489.1 354.0 494.4 357.9 500.0 360.0C505.6 362.1 513.2 363.2 517.8 366.3C522.4 369.4 524.0 374.3 527.5 378.8C531.0 383.3 534.5 389.6 539.0 393.3C543.5 397.0 549.7 397.6 554.5 401.0C559.3 404.4 564.8 408.9 568.0 413.6C571.2 418.3 572.5 425.1 573.8 429.0C575.1 432.9 574.3 434.2 576.0 437.2C577.7 440.2 581.1 443.8 584.0 447.0C586.9 450.2 590.2 453.3 593.4 456.5C596.6 459.7 599.8 463.1 603.0 466.0C606.2 468.9 608.5 471.7 612.7 474.0C616.9 476.3 623.5 477.5 628.0 479.7C632.5 481.9 636.1 484.8 640.0 487.0C643.9 489.2 647.6 491.2 651.3 493.2C655.0 495.2 658.8 497.2 662.0 499.0C665.2 500.8 668.5 501.6 670.6 503.8C672.7 506.0 673.8 506.9 674.4 512.0C675.0 517.1 673.4 527.8 674.3 534.5C675.2 541.2 677.8 545.8 680.0 552.0C682.2 558.2 685.1 565.1 687.3 571.8C689.5 578.5 691.1 585.2 693.0 592.0C694.9 598.8 696.3 606.8 698.5 612.8C700.7 618.8 703.5 623.0 706.0 628.0C708.5 633.0 710.9 635.9 713.4 642.7C715.9 649.5 718.5 661.2 720.9 668.8C723.3 676.3 725.5 681.8 728.0 688.0C730.5 694.2 733.6 701.3 735.8 706.0C738.0 710.7 740.5 714.3 741.4 716.0" stroke="#a895b9" stroke-width="1.4" stroke-opacity=".8"/>
<path d="M82.0 219.0C81.0 220.2 78.7 223.8 76.0 226.0C73.3 228.2 69.3 230.3 66.0 232.0C62.7 233.7 57.7 235.3 56.0 236.0" stroke="#a895b9" stroke-width="1.4" stroke-opacity=".8"/>
<path d="M57.8 217.0C57.5 220.2 55.7 229.8 56.0 236.0C56.3 242.2 57.4 249.5 59.7 254.5C62.0 259.5 66.3 262.2 70.0 266.0C73.7 269.8 77.5 273.3 82.0 277.0C86.5 280.7 93.3 284.2 97.0 288.0C100.7 291.8 101.5 295.7 104.0 300.0C106.5 304.3 108.8 310.4 112.0 314.0C115.2 317.6 118.7 319.7 123.0 321.6C127.3 323.5 134.9 322.3 138.0 325.4C141.1 328.5 141.5 334.4 141.8 340.0C142.1 345.6 141.9 353.3 140.0 359.0C138.1 364.7 132.2 371.5 130.6 374.0" stroke="#a895b9" stroke-width="1.4" stroke-opacity=".8"/>
<path d="M82.0 277.0C81.0 277.8 78.0 280.7 76.0 282.0C74.0 283.3 71.0 284.5 70.0 285.0" stroke="#a895b9" stroke-width="1.4" stroke-opacity=".8"/>
<path d="M97.0 288.0C98.2 286.7 102.3 282.7 104.0 280.0C105.7 277.3 106.5 273.3 107.0 272.0" stroke="#a895b9" stroke-width="1.4" stroke-opacity=".8"/>
<path d="M112.0 314.0C111.0 315.0 107.3 317.3 106.0 320.0C104.7 322.7 103.7 326.7 104.0 330.0C104.3 333.3 106.7 336.3 108.0 340.0C109.3 343.7 110.7 348.0 112.0 352.0C113.3 356.0 115.3 362.0 116.0 364.0" stroke="#a895b9" stroke-width="1.4" stroke-opacity=".8"/>
<path d="M141.8 359.0C143.2 359.8 147.0 363.5 150.0 364.0C153.0 364.5 156.7 362.0 160.0 362.0C163.3 362.0 166.7 364.0 170.0 364.0C173.3 364.0 176.3 362.3 180.0 362.0C183.7 361.7 188.2 362.7 192.0 362.0C195.8 361.3 199.7 359.7 203.0 358.0C206.3 356.3 209.2 354.3 212.0 352.0C214.8 349.7 216.8 348.4 220.0 344.0C223.2 339.6 229.4 328.5 231.3 325.4" stroke="#a895b9" stroke-width="1.4" stroke-opacity=".8"/>
<path d="M266.8 303.0C266.0 305.2 263.5 311.5 262.0 316.0C260.5 320.5 258.5 325.7 258.0 330.0C257.5 334.3 258.5 338.4 259.0 342.0C259.5 345.6 259.5 347.8 261.0 351.5C262.5 355.2 265.5 360.2 268.0 364.0C270.5 367.8 273.0 370.8 276.0 374.0C279.0 377.2 282.2 380.5 286.0 383.0C289.8 385.5 293.3 387.8 298.5 388.8C303.7 389.8 312.4 387.4 317.0 388.8C321.6 390.2 322.9 393.9 326.0 397.0C329.1 400.1 333.0 404.2 335.8 407.5C338.6 410.8 340.5 413.9 343.0 417.0C345.5 420.1 349.0 423.2 350.7 426.0C352.4 428.8 352.7 431.7 353.0 434.0C353.3 436.3 353.3 437.8 352.6 440.0C351.9 442.2 350.6 445.0 349.0 447.0C347.4 449.0 345.0 449.7 343.0 452.0C341.0 454.3 339.5 458.0 337.0 461.0C334.5 464.0 329.8 466.8 328.0 470.0C326.2 473.2 327.0 476.2 326.0 480.0C325.0 483.8 324.3 491.0 322.0 493.0C319.7 495.0 315.3 492.8 312.0 492.0C308.7 491.2 304.0 487.0 302.0 488.0C300.0 489.0 300.2 494.3 300.0 498.0C299.8 501.7 300.8 506.0 301.0 510.0C301.2 514.0 303.0 519.0 301.5 522.0C300.0 525.0 295.6 526.7 292.0 528.0C288.4 529.3 283.5 528.7 280.0 530.0C276.5 531.3 272.8 533.2 271.0 536.0C269.2 538.8 270.5 543.7 269.0 547.0C267.5 550.3 265.8 554.3 262.0 556.0C258.2 557.7 250.0 556.0 246.0 557.0C242.0 558.0 240.0 559.7 238.0 562.0C236.0 564.3 236.7 567.8 234.0 571.0C231.3 574.2 227.7 578.8 222.0 581.0C216.3 583.2 207.0 582.3 200.0 584.0C193.0 585.7 186.0 588.7 180.0 591.0C174.0 593.3 167.7 595.5 164.0 598.0C160.3 600.5 159.2 603.3 158.0 606.0C156.8 608.7 159.0 611.3 157.0 614.0C155.0 616.7 150.8 619.5 146.0 622.0C141.2 624.5 134.3 626.8 128.0 629.0C121.7 631.2 114.3 633.0 108.0 635.0C101.7 637.0 95.7 638.8 90.0 641.0C84.3 643.2 79.3 644.7 74.0 648.0C68.7 651.3 63.7 658.7 58.0 661.0C52.3 663.3 45.7 660.7 40.0 662.0C34.3 663.3 29.3 666.7 24.0 669.0C18.7 671.3 10.7 674.8 8.0 676.0" stroke="#a895b9" stroke-width="1.4" stroke-opacity=".8"/>
<path d="M874.6 716.0C874.8 712.5 875.2 702.2 875.5 695.0C875.8 687.8 876.6 680.8 876.5 672.5C876.4 664.2 875.6 653.7 875.0 645.0C874.4 636.3 869.5 626.8 872.8 620.3C876.1 613.8 887.2 611.0 895.0 606.0C902.8 601.0 912.9 595.2 919.4 590.4C925.9 585.6 929.0 581.4 934.0 577.0C939.0 572.6 943.6 569.3 949.3 564.3C955.0 559.3 961.8 552.6 968.0 547.0C974.2 541.4 979.9 536.2 986.6 530.7C993.3 525.2 1000.5 519.6 1008.0 514.0C1015.5 508.4 1025.0 501.7 1031.3 497.0C1037.6 492.3 1041.0 489.7 1046.0 486.0C1051.0 482.3 1055.3 478.1 1061.0 474.8C1066.7 471.5 1073.8 469.0 1080.0 466.0C1086.2 463.0 1091.8 458.5 1098.5 456.9C1105.2 455.3 1112.5 456.6 1120.0 456.5C1127.5 456.4 1135.7 455.1 1143.3 456.0C1150.9 456.9 1160.6 458.7 1165.7 461.7C1170.8 464.7 1171.5 469.9 1174.0 474.0C1176.5 478.1 1178.6 481.8 1180.6 486.0C1182.6 490.2 1184.1 494.7 1186.0 499.0C1187.9 503.3 1189.8 508.2 1191.8 512.0C1193.8 515.8 1195.6 518.8 1198.0 522.0C1200.4 525.2 1204.7 529.5 1206.0 531.0" stroke="#a895b9" stroke-width="1.4" stroke-opacity=".8"/>
<path d="M1098.5 456.9 L1096.6 445.0" stroke="#a895b9" stroke-width="1.4" stroke-opacity=".8"/>
<path d="M1143.3 456.0 L1145.0 437.5" stroke="#a895b9" stroke-width="1.4" stroke-opacity=".8"/>
<path d="M1173.0 716.0C1174.2 712.0 1177.5 699.9 1180.0 692.0C1182.5 684.1 1186.2 674.1 1188.0 668.8C1189.8 663.5 1189.8 661.9 1191.0 660.0C1192.2 658.1 1194.0 658.9 1195.5 657.6C1197.0 656.3 1198.2 653.9 1200.0 652.0C1201.8 650.1 1205.0 647.0 1206.0 646.0" stroke="#a895b9" stroke-width="1.4" stroke-opacity=".8"/>
<path d="M1195.5 657.6C1196.1 658.7 1198.1 661.6 1199.0 664.0C1199.9 666.4 1200.8 667.7 1201.0 672.0C1201.2 676.3 1200.0 682.7 1200.0 690.0C1200.0 697.3 1200.8 711.7 1201.0 716.0" stroke="#a895b9" stroke-width="1.4" stroke-opacity=".8"/>
<path d="M648.0 716.0C648.3 714.0 648.4 707.8 650.0 704.0C651.6 700.2 654.5 694.7 657.5 693.0C660.5 691.3 664.9 692.2 668.0 694.0C671.1 695.8 673.4 700.3 676.0 704.0C678.6 707.7 682.3 714.0 683.6 716.0" stroke="#a895b9" stroke-width="1.4" stroke-opacity=".8"/>
<path d="M176.0 694.0C177.8 692.0 177.3 689.5 180.0 688.0C182.7 686.5 187.7 685.3 192.0 685.0C196.3 684.7 202.3 685.0 206.0 686.0C209.7 687.0 212.5 689.2 214.0 691.0C215.5 692.8 216.0 695.2 215.0 697.0C214.0 698.8 211.2 700.8 208.0 702.0C204.8 703.2 199.7 703.8 196.0 704.0C192.3 704.2 188.3 702.5 186.0 703.0C183.7 703.5 183.7 706.0 182.0 707.0C180.3 708.0 178.0 709.2 176.0 709.0C174.0 708.8 171.2 707.5 170.0 706.0C168.8 704.5 168.0 702.0 169.0 700.0C170.0 698.0 174.2 696.0 176.0 694.0Z" stroke="#a895b9" stroke-width="1.4" stroke-opacity=".8"/>
<path d="M146.0 700.0C146.5 698.5 147.7 696.5 149.0 696.0C150.3 695.5 152.7 696.0 154.0 697.0C155.3 698.0 156.7 700.3 157.0 702.0C157.3 703.7 157.2 706.0 156.0 707.0C154.8 708.0 151.7 708.3 150.0 708.0C148.3 707.7 146.7 706.3 146.0 705.0C145.3 703.7 145.5 701.5 146.0 700.0Z" stroke="#a895b9" stroke-width="1.4" stroke-opacity=".8"/>
<path d="M103.0 716.0C98.8 714.8 105.8 710.7 108.0 709.0C110.2 707.3 113.0 706.3 116.0 706.0C119.0 705.7 123.3 706.0 126.0 707.0C128.7 708.0 130.8 710.5 132.0 712.0C133.2 713.5 137.8 715.3 133.0 716.0C128.2 716.7 107.2 717.2 103.0 716.0Z" stroke="#a895b9" stroke-width="1.4" stroke-opacity=".8"/>
<circle cx="157.5" cy="337.7" r="6" stroke="#a895b9" stroke-width="1.3" stroke-opacity=".8"/>
<circle cx="152.2" cy="355" r="6" stroke="#a895b9" stroke-width="1.3" stroke-opacity=".8"/>
<circle cx="169.8" cy="353.4" r="7" stroke="#a895b9" stroke-width="1.3" stroke-opacity=".8"/>
<circle cx="203.4" cy="350.4" r="6" stroke="#a895b9" stroke-width="1.3" stroke-opacity=".8"/>
<circle cx="214.6" cy="347.8" r="5" stroke="#a895b9" stroke-width="1.3" stroke-opacity=".8"/>
<circle cx="99" cy="271" r="6.5" stroke="#a895b9" stroke-width="1.3" stroke-opacity=".8"/>
</g>
<g fill="#f8f6f2" fill-opacity=".7" stroke="#5a5a5a" stroke-width="1">
<circle cx="276" cy="203" r="2.3"/>
<circle cx="373" cy="227" r="2.3"/>
<circle cx="117" cy="244" r="2.3"/>
<circle cx="110" cy="322" r="3.2"/>
<circle cx="234" cy="346" r="2.3"/>
<circle cx="84" cy="345" r="2.3"/>
<circle cx="11" cy="366" r="3.2"/>
<circle cx="310" cy="396" r="3.2"/>
<circle cx="497" cy="165" r="2.3"/>
<circle cx="531" cy="207" r="2.3"/>
<circle cx="718" cy="165" r="2.3"/>
<circle cx="645" cy="207" r="2.3"/>
<circle cx="650" cy="230" r="2.3"/>
<circle cx="615" cy="259" r="2.3"/>
<circle cx="578" cy="280" r="2.3"/>
<circle cx="566" cy="345" r="2.3"/>
<circle cx="531" cy="361" r="2.3"/>
<circle cx="757" cy="186" r="2.3"/>
<circle cx="813" cy="202" r="2.3"/>
<circle cx="783" cy="213" r="2.3"/>
<circle cx="692" cy="270" r="2.3"/>
<circle cx="776" cy="266" r="2.3"/>
<circle cx="848" cy="261" r="2.3"/>
<circle cx="756" cy="302" r="2.3"/>
<circle cx="812" cy="295" r="2.3"/>
<circle cx="757" cy="352" r="2.3"/>
<circle cx="872" cy="315" r="2.3"/>
<circle cx="910" cy="344" r="2.3"/>
<circle cx="827" cy="344" r="2.3"/>
<circle cx="949" cy="307" r="2.3"/>
<circle cx="994" cy="340" r="2.3"/>
<circle cx="1079" cy="309" r="2.3"/>
<circle cx="701" cy="368" r="2.3"/>
<circle cx="797" cy="406" r="2.3"/>
<circle cx="861" cy="408" r="2.3"/>
<circle cx="1023" cy="418" r="2.3"/>
<circle cx="673" cy="404" r="2.3"/>
<circle cx="609" cy="428" r="2.3"/>
<circle cx="757" cy="421" r="2.3"/>
<circle cx="1077" cy="425" r="2.3"/>
<circle cx="680" cy="462" r="2.3"/>
<circle cx="805" cy="470" r="2.3"/>
<circle cx="1013" cy="483" r="2.3"/>
<circle cx="704" cy="495" r="2.3"/>
<circle cx="744" cy="498" r="2.3"/>
<circle cx="949" cy="556" r="2.3"/>
<circle cx="758" cy="558" r="2.3"/>
<circle cx="722" cy="606" r="2.3"/>
<circle cx="814" cy="607" r="2.3"/>
<circle cx="759" cy="644" r="2.3"/>
<circle cx="863" cy="644" r="2.3"/>
<circle cx="731" cy="687" r="2.3"/>
<circle cx="1000" cy="279" r="3.2"/>
<circle cx="1091" cy="234" r="2.3"/>
<circle cx="1147" cy="223" r="2.3"/>
<circle cx="1100" cy="334" r="2.3"/>
<circle cx="1167" cy="360" r="2.3"/>
<circle cx="1108" cy="417" r="2.3"/>
<circle cx="1166" cy="431" r="2.3"/>
<circle cx="1189" cy="393" r="2.3"/>
</g><g fill="#444">
<circle cx="110" cy="322" r="1.3"/>
<circle cx="11" cy="366" r="1.3"/>
<circle cx="310" cy="396" r="1.3"/>
<circle cx="1000" cy="279" r="1.3"/>
</g>
<g text-anchor="middle" stroke-linejoin="round" paint-order="stroke" stroke="#fff" stroke-opacity=".75" stroke-width="2.2">
<text x="67" y="180.8" font-family="DejaVu Sans, Noto Sans CJK SC, sans-serif" font-size="11" fill="#a183a3">استان خوزستان</text>
<text x="213" y="172.8" font-family="DejaVu Sans, Noto Sans CJK SC, sans-serif" font-size="11" fill="#a183a3">استان یزد</text>
<text x="276" y="198.6" font-family="DejaVu Sans, Noto Sans CJK SC, sans-serif" font-size="13" fill="#3c3c3c">کرمان</text>
<text x="180" y="234.8" font-family="DejaVu Sans, Noto Sans CJK SC, sans-serif" font-size="11" fill="#a183a3">استان فارس</text>
<text x="281" y="240.8" font-family="DejaVu Sans, Noto Sans CJK SC, sans-serif" font-size="11" fill="#a183a3">استان کرمان</text>
<text x="373" y="242.6" font-family="DejaVu Sans, Noto Sans CJK SC, sans-serif" font-size="13" fill="#3c3c3c">زاهدان</text>
<text x="381" y="263.9" font-family="DejaVu Sans, Noto Sans CJK SC, sans-serif" font-size="11" fill="#a183a3">استان سیستان</text>
<text x="381" y="277.9" font-family="DejaVu Sans, Noto Sans CJK SC, sans-serif" font-size="11" fill="#a183a3">و بلوچستان</text>
<text x="117" y="258.2" font-family="DejaVu Sans, Noto Sans CJK SC, sans-serif" font-size="12" fill="#3c3c3c">بوشهر</text>
<text x="226" y="304.9" font-family="DejaVu Sans, Noto Sans CJK SC, sans-serif" font-size="11" fill="#a183a3">استان هرمزگان</text>
<text x="110" y="315.2" font-family="DejaVu Sans, Noto Sans CJK SC, sans-serif" font-size="12" fill="#3c3c3c">المنامة</text>
<text x="126" y="349.9" font-family="DejaVu Sans, Noto Sans CJK SC, sans-serif" font-size="14" fill="#8a5f8c">قطر</text>
<text x="234" y="343.2" font-family="DejaVu Sans, Noto Sans CJK SC, sans-serif" font-size="12" fill="#3c3c3c">الشارقة</text>
<text x="84" y="361.2" font-family="DejaVu Sans, Noto Sans CJK SC, sans-serif" font-size="12" fill="#3c3c3c">الأحساء</text>
<text x="13" y="384.2" font-family="DejaVu Sans, Noto Sans CJK SC, sans-serif" font-size="12" fill="#3c3c3c">الرياض</text>
<text x="92" y="384.9" font-family="DejaVu Sans, Noto Sans CJK SC, sans-serif" font-size="11" fill="#a183a3">المنطقة الشرقية</text>
<text x="188" y="373.9" font-family="DejaVu Sans, Noto Sans CJK SC, sans-serif" font-size="14" fill="#8a5f8c">الإمارات العربية</text>
<text x="188" y="390.9" font-family="DejaVu Sans, Noto Sans CJK SC, sans-serif" font-size="14" fill="#8a5f8c">المتحدة</text>
<text x="310" y="414.2" font-family="DejaVu Sans, Noto Sans CJK SC, sans-serif" font-size="12" fill="#3c3c3c">مسقط</text>
<text x="279" y="481.9" font-family="DejaVu Sans, Noto Sans CJK SC, sans-serif" font-size="14" fill="#8a5f8c">عمان</text>
<text x="264" y="508.9" font-family="DejaVu Sans, Noto Sans CJK SC, sans-serif" font-size="11" fill="#a183a3">محافظة الوسطى</text>
<text x="205" y="547.9" font-family="DejaVu Sans, Noto Sans CJK SC, sans-serif" font-size="11" fill="#a183a3">محافظة ظفار</text>
<text x="143" y="581.9" font-family="DejaVu Sans, Noto Sans CJK SC, sans-serif" font-size="11" fill="#a183a3">محافظة المهرة</text>
<text x="60" y="596.9" font-family="DejaVu Sans, Noto Sans CJK SC, sans-serif" font-size="11" fill="#a183a3">محافظة حضرموت</text>
<text x="25" y="616.9" font-family="DejaVu Sans, Noto Sans CJK SC, sans-serif" font-size="14" fill="#8a5f8c">اليمن</text>
<text x="12" y="548.9" font-family="DejaVu Sans, Noto Sans CJK SC, sans-serif" font-size="11" fill="#a183a3">منطقة</text>
<text x="14" y="181.2" font-family="DejaVu Sans, Noto Sans CJK SC, sans-serif" font-size="12" fill="#3c3c3c">النجف</text>
<text x="518" y="169.2" font-family="DejaVu Sans, Noto Sans CJK SC, sans-serif" font-size="12" fill="#3c3c3c">کندهار</text>
<text x="455" y="175.8" font-family="DejaVu Sans, Noto Sans CJK SC, sans-serif" font-size="11" fill="#a183a3">هلمند ولایت</text>
<text x="531" y="202.2" font-family="DejaVu Sans, Noto Sans CJK SC, sans-serif" font-size="12" fill="#3c3c3c" textLength="24" lengthAdjust="spacingAndGlyphs">کوئٹہ</text>
<text x="499" y="262.9" font-family="DejaVu Sans, Noto Sans CJK SC, sans-serif" font-size="11" fill="#a183a3">بلوچستان</text>
<text x="611" y="212.2" font-family="DejaVu Sans, Noto Sans CJK SC, sans-serif" font-size="15" fill="#8a5f8c">پاکستان</text>
<text x="676" y="163.2" font-family="DejaVu Sans, Noto Sans CJK SC, sans-serif" font-size="12" fill="#3c3c3c" textLength="41" lengthAdjust="spacingAndGlyphs">سرگودھا</text>
<text x="667" y="189.8" font-family="DejaVu Sans, Noto Sans CJK SC, sans-serif" font-size="11" fill="#a183a3">پنجاب</text>
<text x="718" y="181.2" font-family="DejaVu Sans, Noto Sans CJK SC, sans-serif" font-size="12" fill="#3c3c3c" textLength="20" lengthAdjust="spacingAndGlyphs">لاہور</text>
<text x="663" y="212.2" font-family="DejaVu Sans, Noto Sans CJK SC, sans-serif" font-size="12" fill="#3c3c3c">ملتان</text>
<text x="650" y="246.2" font-family="DejaVu Sans, Noto Sans CJK SC, sans-serif" font-size="12" fill="#3c3c3c" textLength="35" lengthAdjust="spacingAndGlyphs">بہاولپور</text>
<text x="580" y="265.2" font-family="DejaVu Sans, Noto Sans CJK SC, sans-serif" font-size="12" fill="#3c3c3c">رحیم یار خان</text>
<text x="578" y="295.2" font-family="DejaVu Sans, Noto Sans CJK SC, sans-serif" font-size="12" fill="#3c3c3c" textLength="26" lengthAdjust="spacingAndGlyphs">سکھر</text>
<text x="576" y="331.9" font-family="DejaVu Sans, Noto Sans CJK SC, sans-serif" font-size="11" fill="#a183a3" textLength="26" lengthAdjust="spacingAndGlyphs">سندھ</text>
<text x="589" y="351.2" font-family="DejaVu Sans, Noto Sans CJK SC, sans-serif" font-size="12" fill="#3c3c3c">حیدرآباد</text>
<text x="531" y="377.2" font-family="DejaVu Sans, Noto Sans CJK SC, sans-serif" font-size="12" fill="#3c3c3c">کراچی</text>
<text x="795" y="169.0" font-family="Liberation Sans, sans-serif" font-size="11.5" fill="#9a739c" font-style="italic">Pradesh</text>
<text x="756" y="199.6" font-family="Liberation Sans, sans-serif" font-size="13" fill="#3c3c3c">Ludhiana</text>
<text x="847" y="207.6" font-family="Liberation Sans, sans-serif" font-size="13" fill="#3c3c3c">Dehradun</text>
<text x="783" y="226.6" font-family="Liberation Sans, sans-serif" font-size="13" fill="#3c3c3c">Kurukshetra</text>
<text x="792" y="246.6" font-family="Liberation Sans, sans-serif" font-size="13" fill="#3c3c3c">New Delhi</text>
<text x="692" y="265.6" font-family="Liberation Sans, sans-serif" font-size="13" fill="#3c3c3c">Bikaner</text>
<text x="752" y="270.6" font-family="Liberation Sans, sans-serif" font-size="13" fill="#3c3c3c">Rewari</text>
<text x="882" y="265.6" font-family="Liberation Sans, sans-serif" font-size="13" fill="#3c3c3c">Bareilly</text>
<text x="756" y="297.6" font-family="Liberation Sans, sans-serif" font-size="13" fill="#3c3c3c">Jaipur</text>
<text x="812" y="290.6" font-family="Liberation Sans, sans-serif" font-size="13" fill="#3c3c3c">Agra</text>
<text x="705" y="315.0" font-family="Liberation Sans, sans-serif" font-size="11.5" fill="#9a739c" font-style="italic">Rajasthan</text>
<text x="884" y="299.0" font-family="Liberation Sans, sans-serif" font-size="11.5" fill="#9a739c" font-style="italic">Uttar Pradesh</text>
<text x="757" y="347.6" font-family="Liberation Sans, sans-serif" font-size="13" fill="#3c3c3c">Kota</text>
<text x="846" y="320.6" font-family="Liberation Sans, sans-serif" font-size="13" fill="#3c3c3c">Kanpur</text>
<text x="910" y="340.6" font-family="Liberation Sans, sans-serif" font-size="13" fill="#3c3c3c">Prayagraj</text>
<text x="827" y="359.6" font-family="Liberation Sans, sans-serif" font-size="13" fill="#3c3c3c">Jhansi</text>
<text x="985" y="311.6" font-family="Liberation Sans, sans-serif" font-size="13" fill="#3c3c3c">Gorakhpur</text>
<text x="1020" y="335.0" font-family="Liberation Sans, sans-serif" font-size="11.5" fill="#9a739c" font-style="italic">Bihar</text>
<text x="994" y="353.6" font-family="Liberation Sans, sans-serif" font-size="13" fill="#3c3c3c">Patna</text>
<text x="1079" y="322.6" font-family="Liberation Sans, sans-serif" font-size="13" fill="#3c3c3c">Siliguri</text>
<text x="1139" y="331.0" font-family="Liberation Sans, sans-serif" font-size="11.5" fill="#9a739c" font-style="italic">Assam</text>
<text x="701" y="382.6" font-family="Liberation Sans, sans-serif" font-size="13" fill="#3c3c3c">Udaipur</text>
<text x="797" y="401.6" font-family="Liberation Sans, sans-serif" font-size="13" fill="#3c3c3c">Bhopal</text>
<text x="847" y="383.0" font-family="Liberation Sans, sans-serif" font-size="11.5" fill="#9a739c" font-style="italic">Madhya</text>
<text x="847" y="396.0" font-family="Liberation Sans, sans-serif" font-size="11.5" fill="#9a739c" font-style="italic">Pradesh</text>
<text x="861" y="423.6" font-family="Liberation Sans, sans-serif" font-size="13" fill="#3c3c3c">Jabalpur</text>
<text x="995" y="400.0" font-family="Liberation Sans, sans-serif" font-size="11.5" fill="#9a739c" font-style="italic">Jharkhand</text>
<text x="1069" y="377.0" font-family="Liberation Sans, sans-serif" font-size="11.5" fill="#9a739c" font-style="italic">West Bengal</text>
<text x="982" y="424.6" font-family="Liberation Sans, sans-serif" font-size="13" fill="#3c3c3c">Jamshedpur</text>
<text x="673" y="408.6" font-family="Liberation Sans, sans-serif" font-size="13" fill="#3c3c3c">Ahmedabad</text>
<text x="576" y="433.6" font-family="Liberation Sans, sans-serif" font-size="13" fill="#3c3c3c">Jamnagar</text>
<text x="659" y="435.0" font-family="Liberation Sans, sans-serif" font-size="11.5" fill="#9a739c" font-style="italic">Gujarat</text>
<text x="757" y="435.6" font-family="Liberation Sans, sans-serif" font-size="13" fill="#3c3c3c">Indore</text>
<text x="839" y="452.4" font-family="Liberation Sans, sans-serif" font-size="15.5" fill="#8a5f8c" letter-spacing=".4">India</text>
<text x="1077" y="438.6" font-family="Liberation Sans, sans-serif" font-size="13" fill="#3c3c3c">Kolkata</text>
<text x="680" y="476.6" font-family="Liberation Sans, sans-serif" font-size="13" fill="#3c3c3c">Surat</text>
<text x="776" y="474.6" font-family="Liberation Sans, sans-serif" font-size="13" fill="#3c3c3c">Amravati</text>
<text x="902" y="473.0" font-family="Liberation Sans, sans-serif" font-size="11.5" fill="#9a739c" font-style="italic">Chhattisgarh</text>
<text x="978" y="494.0" font-family="Liberation Sans, sans-serif" font-size="11.5" fill="#9a739c" font-style="italic">Odisha</text>
<text x="1040" y="487.6" font-family="Liberation Sans, sans-serif" font-size="13" fill="#3c3c3c">Cuttack</text>
<text x="704" y="508.6" font-family="Liberation Sans, sans-serif" font-size="13" fill="#3c3c3c">Nashik</text>
<text x="787" y="497.6" font-family="Liberation Sans, sans-serif" font-size="13" fill="#3c3c3c">Ch. Sambhaji</text>
<text x="767" y="512.5" font-family="Liberation Sans, sans-serif" font-size="13" fill="#3c3c3c">Nagar</text>
<text x="681" y="534.5" font-family="Liberation Sans, sans-serif" font-size="13" fill="#3c3c3c">Mumbai</text>
<text x="747" y="531.0" font-family="Liberation Sans, sans-serif" font-size="11.5" fill="#9a739c" font-style="italic">Maharashtra</text>
<text x="948" y="552.5" font-family="Liberation Sans, sans-serif" font-size="13" fill="#3c3c3c">Visakhapatnam</text>
<text x="845" y="557.0" font-family="Liberation Sans, sans-serif" font-size="11.5" fill="#9a739c" font-style="italic">Telangana</text>
<text x="758" y="572.5" font-family="Liberation Sans, sans-serif" font-size="13" fill="#3c3c3c">Solapur</text>
<text x="722" y="601.5" font-family="Liberation Sans, sans-serif" font-size="13" fill="#3c3c3c">Belagavi</text>
<text x="785" y="611.5" font-family="Liberation Sans, sans-serif" font-size="13" fill="#3c3c3c">Kurnool</text>
<text x="854" y="603.0" font-family="Liberation Sans, sans-serif" font-size="11.5" fill="#9a739c" font-style="italic">Andhra</text>
<text x="854" y="616.0" font-family="Liberation Sans, sans-serif" font-size="11.5" fill="#9a739c" font-style="italic">Pradesh</text>
<text x="749" y="632.0" font-family="Liberation Sans, sans-serif" font-size="11.5" fill="#9a739c" font-style="italic">Karnataka</text>
<text x="759" y="658.5" font-family="Liberation Sans, sans-serif" font-size="13" fill="#3c3c3c">Davanagere</text>
<text x="863" y="657.5" font-family="Liberation Sans, sans-serif" font-size="13" fill="#3c3c3c">Nellore</text>
<text x="695" y="691.5" font-family="Liberation Sans, sans-serif" font-size="13" fill="#3c3c3c">Mangaluru</text>
<text x="801" y="697.5" font-family="Liberation Sans, sans-serif" font-size="13" fill="#3c3c3c">Bengaluru</text>
<text x="870" y="694.5" font-family="Liberation Sans, sans-serif" font-size="13" fill="#3c3c3c">Chennai</text>
<text x="1192" y="387.6" font-family="Liberation Sans, sans-serif" font-size="13" fill="#3c3c3c">Aizawl</text>
<text x="942" y="265.9" font-family="DejaVu Sans, Noto Sans CJK SC, sans-serif" font-size="14" fill="#8a5f8c" textLength="30" lengthAdjust="spacingAndGlyphs">नेपाल</text>
<text x="1000" y="273.2" font-family="DejaVu Sans, Noto Sans CJK SC, sans-serif" font-size="12" fill="#3c3c3c" textLength="40" lengthAdjust="spacingAndGlyphs">काठमाडौँ</text>
<text x="1045" y="188.8" font-family="DejaVu Sans, Noto Sans CJK SC, sans-serif" font-size="11" fill="#a183a3" textLength="40" lengthAdjust="spacingAndGlyphs">བོད་ལྗོངས།</text>
<text x="1061" y="222.2" font-family="DejaVu Sans, Noto Sans CJK SC, sans-serif" font-size="12" fill="#3c3c3c">日喀则市</text>
<text x="1141" y="185.7" font-family="DejaVu Sans, Noto Sans CJK SC, sans-serif" font-size="12" fill="#3c3c3c">拉萨市</text>
<text x="1167.5" y="186.2" font-family="DejaVu Sans, Noto Sans CJK SC, sans-serif" font-size="12" fill="#3c3c3c" textLength="9" lengthAdjust="spacingAndGlyphs">ལྷ་</text>
<text x="1148" y="217.2" font-family="DejaVu Sans, Noto Sans CJK SC, sans-serif" font-size="12" fill="#3c3c3c" textLength="10" lengthAdjust="spacingAndGlyphs">ས།</text>
<text x="1062" y="256.2" font-family="DejaVu Sans, Noto Sans CJK SC, sans-serif" font-size="12" fill="#3c3c3c" textLength="50" lengthAdjust="spacingAndGlyphs">གཞིས་ཀ་རྩེ།</text>
<text x="1130" y="293.6" font-family="DejaVu Sans, Noto Sans CJK SC, sans-serif" font-size="13" fill="#8a5f8c" textLength="52" lengthAdjust="spacingAndGlyphs">འབྲུག་ཡུལ་</text>
<text x="1100" y="349.2" font-family="DejaVu Sans, Noto Sans CJK SC, sans-serif" font-size="12" fill="#3c3c3c" textLength="29" lengthAdjust="spacingAndGlyphs">রংপুর</text>
<text x="1167" y="355.2" font-family="DejaVu Sans, Noto Sans CJK SC, sans-serif" font-size="12" fill="#3c3c3c" textLength="32" lengthAdjust="spacingAndGlyphs">সিলেট</text>
<text x="1121" y="401.9" font-family="DejaVu Sans, Noto Sans CJK SC, sans-serif" font-size="14" fill="#8a5f8c" textLength="56" lengthAdjust="spacingAndGlyphs">বাংলাদেশ</text>
<text x="1129" y="421.2" font-family="DejaVu Sans, Noto Sans CJK SC, sans-serif" font-size="12" fill="#3c3c3c" textLength="27" lengthAdjust="spacingAndGlyphs">খুলনা</text>
<text x="1166" y="450.2" font-family="DejaVu Sans, Noto Sans CJK SC, sans-serif" font-size="12" fill="#3c3c3c" textLength="34" lengthAdjust="spacingAndGlyphs">চট্টগ্রাম</text>
</g>
<g transform="translate(673.5 427.3)"><circle cx="5" cy="-8" r="16.500" fill="#fff" opacity=".3"/><path d="M-9 3a16.500 16.500 0 0 0 27 -4a17 17 0 0 1 -27 4z" fill="#000" opacity=".13"/></g>
<g transform="translate(800.4 699.5)"><circle cx="5" cy="-8" r="16.500" fill="#fff" opacity=".3"/><path d="M-9 3a16.500 16.500 0 0 0 27 -4a17 17 0 0 1 -27 4z" fill="#000" opacity=".13"/></g>
<g transform="translate(777 187)"><path d="M0 0H7C9 0.500 10.500 2.800 14 3.600L10.600 6.100L14.200 10.600C11 10.500 9 8.300 7 8.300L2 8.100V20H0Z" fill="#33302a" opacity=".3" transform="translate(1.200 1.200)" filter="url(#b1)"/><path d="M0 0H7C9 0.500 10.500 2.800 14 3.600L10.600 6.100L14.200 10.600C11 10.500 9 8.300 7 8.300L2 8.100V20H0Z" fill="#ff7f0e"/></g>
<g transform="translate(784 255.4)"><path d="M0 0H7C9 0.500 10.500 2.800 14 3.600L10.600 6.100L14.200 10.600C11 10.500 9 8.300 7 8.300L2 8.100V20H0Z" fill="#33302a" opacity=".3" transform="translate(1.200 1.200)" filter="url(#b1)"/><path d="M0 0H7C9 0.500 10.500 2.800 14 3.600L10.600 6.100L14.200 10.600C11 10.500 9 8.300 7 8.300L2 8.100V20H0Z" fill="#ff7f0e"/></g>
<g transform="translate(788.5 250.6)"><path d="M0 0H7C9 0.500 10.500 2.800 14 3.600L10.600 6.100L14.200 10.600C11 10.500 9 8.300 7 8.300L2 8.100V20H0Z" fill="#33302a" opacity=".3" transform="translate(1.200 1.200)" filter="url(#b1)"/><path d="M0 0H7C9 0.500 10.500 2.800 14 3.600L10.600 6.100L14.200 10.600C11 10.500 9 8.300 7 8.300L2 8.100V20H0Z" fill="#ff7f0e"/></g>
<g transform="translate(677.5 518)"><path d="M0 0H7C9 0.500 10.500 2.800 14 3.600L10.600 6.100L14.200 10.600C11 10.500 9 8.300 7 8.300L2 8.100V20H0Z" fill="#33302a" opacity=".3" transform="translate(1.200 1.200)" filter="url(#b1)"/><path d="M0 0H7C9 0.500 10.500 2.800 14 3.600L10.600 6.100L14.200 10.600C11 10.500 9 8.300 7 8.300L2 8.100V20H0Z" fill="#ff7f0e"/></g>
<g transform="translate(821 563)"><path d="M0 0H7C9 0.500 10.500 2.800 14 3.600L10.600 6.100L14.200 10.600C11 10.500 9 8.300 7 8.300L2 8.100V20H0Z" fill="#33302a" opacity=".3" transform="translate(1.200 1.200)" filter="url(#b1)"/><path d="M0 0H7C9 0.500 10.500 2.800 14 3.600L10.600 6.100L14.200 10.600C11 10.500 9 8.300 7 8.300L2 8.100V20H0Z" fill="#ff7f0e"/></g>
<g transform="translate(867.4 678)"><path d="M0 0H7C9 0.500 10.500 2.800 14 3.600L10.600 6.100L14.200 10.600C11 10.500 9 8.300 7 8.300L2 8.100V20H0Z" fill="#33302a" opacity=".3" transform="translate(1.200 1.200)" filter="url(#b1)"/><path d="M0 0H7C9 0.500 10.500 2.800 14 3.600L10.600 6.100L14.200 10.600C11 10.500 9 8.300 7 8.300L2 8.100V20H0Z" fill="#ff7f0e"/></g>
<g transform="translate(798 679)"><path d="M0 0H7C9 0.500 10.500 2.800 14 3.600L10.600 6.100L14.200 10.600C11 10.500 9 8.300 7 8.300L2 8.100V20H0Z" fill="#33302a" opacity=".3" transform="translate(1.200 1.200)" filter="url(#b1)"/><path d="M0 0H7C9 0.500 10.500 2.800 14 3.600L10.600 6.100L14.200 10.600C11 10.500 9 8.300 7 8.300L2 8.100V20H0Z" fill="#ff7f0e"/></g>
<g transform="translate(673.5 427.3)"><path d="M0 0C-2.500 -6.500 -9.700 -14.500 -9.700 -22.600a9.700 9.700 0 0 1 19.400 0C9.700 -14.500 2.500 -6.500 0 0zM0 -27.300a4.500 4.500 0 1 0 0 9a4.500 4.500 0 1 0 0 -9z" fill-rule="evenodd" fill="#3a3a3a" opacity=".45" transform="translate(1.400 .500)"/><path d="M0 0C-2.500 -6.500 -9.700 -14.500 -9.700 -22.600a9.700 9.700 0 0 1 19.400 0C9.700 -14.500 2.500 -6.500 0 0zM0 -27.300a4.500 4.500 0 1 0 0 9a4.500 4.500 0 1 0 0 -9z" fill-rule="evenodd" fill="#d8232a"/></g>
<g transform="translate(800.4 699.5)"><path d="M0 0C-2.500 -6.500 -9.700 -14.500 -9.700 -22.600a9.700 9.700 0 0 1 19.400 0C9.700 -14.500 2.500 -6.500 0 0zM0 -27.300a4.500 4.500 0 1 0 0 9a4.500 4.500 0 1 0 0 -9z" fill-rule="evenodd" fill="#3a3a3a" opacity=".45" transform="translate(1.400 .500)"/><path d="M0 0C-2.500 -6.500 -9.700 -14.500 -9.700 -22.600a9.700 9.700 0 0 1 19.400 0C9.700 -14.500 2.500 -6.500 0 0zM0 -27.300a4.500 4.500 0 1 0 0 9a4.500 4.500 0 1 0 0 -9z" fill-rule="evenodd" fill="#2e9e35"/></g>
</svg>
<div class="abs" id="zc"><div class="zb" style="border-bottom:1px solid #ccc">+</div><div class="zb" style="height:33px"><span style="position:relative;top:-2px">&#8722;</span></div></div>
</div>
<div class="abs" id="cap">Sum of Employee Capacity by State</div>
<div class="abs" id="pshadow"></div>
<div class="abs" id="panel"></div>
<div class="abs" id="phead"></div>
<div class="abs" id="ptitle">Chart Properties</div>
<svg class="abs" style="left:1512px;top:107px" width="18" height="18" viewBox="0 0 18 18"><path d="M1.5 1.5l15 15M16.500 1.500l-15 15" stroke="#222" stroke-width="1.5" fill="none"/></svg>
<div class="abs" id="sbt"></div><div class="abs" id="sbh"></div>
<svg class="abs" style="left:1160px;top:145px" width="52" height="34" viewBox="0 0 52 34"><path d="M17 2.500a14.500 14.500 0 1 0 0 29c5 0 8.500-2.300 11.500-5.200l17.5 -9.300l-17.5 -9.300c-3-2.900-6.500-5.200-11.500-5.200z" fill="#f8a616"/><text x="20" y="22.500" text-anchor="middle" font-family="Liberation Sans,sans-serif" font-size="15" fill="#fff">4</text></svg>
<svg class="abs" style="left:1163.5px;top:228.8px" width="52" height="34" viewBox="0 0 52 34"><path d="M17 2.500a14.500 14.500 0 1 0 0 29c5 0 8.500-2.300 11.500-5.200l17.0 -9.300l-17.0 -9.300c-3-2.900-6.500-5.200-11.500-5.200z" fill="#f8a616"/><text x="19.09999999999991" y="22.500" text-anchor="middle" font-family="Liberation Sans,sans-serif" font-size="15" fill="#fff">5</text></svg>
<div class="abs hl" style="left:1205px;top:145.500px;width:126px;height:34.500px;background:#fff"></div>
<div class="abs h" style="top:156.5px">General Settings</div>
<div class="abs l" style="top:199.5px">Exclude Global Filter:</div>
<div class="abs ck" style="left:1371px;top:197px;width:14px;height:14px"></div>
<svg class="abs" style="left:1371px;top:197px" width="14" height="14" viewBox="0 0 14 14"><path d="M3.500 7.200l2.400 2.400 4.600-4.800" stroke="#fff" stroke-width="1.800" fill="none" stroke-linecap="round" stroke-linejoin="round"/></svg>
<div class="abs hl" style="left:1208px;top:225.300px;width:322px;height:41.500px"></div>
<div class="abs l" style="top:235.5px">Geometry Type:</div>
<div class="abs inp" style="top:230px;height:30.500px">Trip</div>
<svg class="abs" style="left:1494px;top:241px" width="16" height="10" viewBox="0 0 16 10"><path d="M2 2l6 6 6-6" stroke="#222" stroke-width="1.700" fill="none"/></svg>
<div class="abs hr" style="top:279px"></div>
<div class="abs h" style="top:294.5px;font-size:13.300px">View Filter</div>
<div class="abs l" style="top:333.5px">Filter:</div>
<div class="abs inp" style="top:327px;height:31px">city</div>
<svg class="abs" style="left:1494px;top:338px" width="16" height="10" viewBox="0 0 16 10"><path d="M2 2l6 6 6-6" stroke="#222" stroke-width="1.700" fill="none"/></svg>
<div class="abs hr" style="top:376px"></div>
<div class="abs h" style="top:392.5px;font-size:13.300px">Range</div>
<div class="abs l" style="top:430.5px">Dynamic Range:</div>
<div class="abs ck" style="left:1371px;top:429px;width:18px;height:18px;border-radius:4px"></div>
<svg class="abs" style="left:1371px;top:429px" width="18" height="18" viewBox="0 0 18 18"><path d="M4.800 9.300l3 3 5.600-6" stroke="#fff" stroke-width="2.200" fill="none" stroke-linecap="round" stroke-linejoin="round"/></svg>
<div class="abs l" style="top:466.5px">Min Color:</div>
<div class="abs sw" style="top:461px;background:#fb07b4"></div>
<div class="abs l" style="top:507.5px">Max Color:</div>
<div class="abs sw" style="top:501px;height:32px;background:#26c281"></div>
<div class="abs hr" style="top:551px"></div>
<div class="abs h" style="top:566.5px;font-size:13.300px">Insights</div>
<div class="abs l" style="top:604.5px">Text:</div>
<div class="abs inp" style="top:599px;height:72px;line-height:21px;padding-top:2.500px;font-size:13.400px">Sum of Employee<br>Capacity by State</div>
<svg class="abs" style="left:1512px;top:657px" width="12" height="12" viewBox="0 0 12 12"><path d="M2 11l9-9M7 11l4-4" stroke="#222" stroke-width="1.200" fill="none"/></svg>
<div class="abs l" style="top:685.5px">Font Size:</div>
<div class="abs inp" style="top:680px;height:31px">20</div>
<div class="abs l" style="top:726.5px">Font Color:</div>
<div class="abs sw" style="top:719.500px;height:32px;background:#1a27d1"></div>
</body>
</html>
